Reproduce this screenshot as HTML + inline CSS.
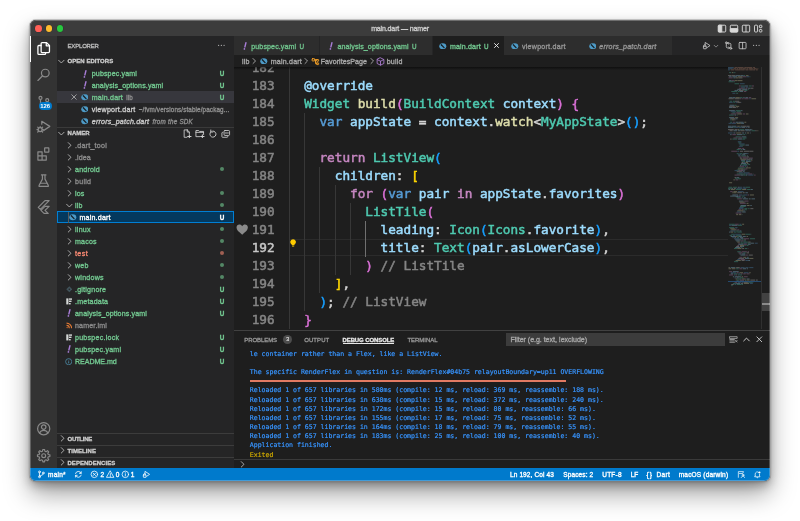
<!DOCTYPE html>
<html><head><meta charset="utf-8"><title>main.dart — namer</title>
<style>
*{box-sizing:border-box;margin:0;padding:0}
html,body{width:800px;height:521px;background:#fff;overflow:hidden}
body{font-family:"Liberation Sans",sans-serif;font-size:7.07px;color:#ccc;position:relative}
#win{position:absolute;left:29.9px;top:20.1px;width:740px;height:460.7px;border-radius:6px;overflow:hidden;background:#1e1e1e;
 box-shadow:0 0 0 .6px rgba(255,255,255,.4),0 0 0 1.1px rgba(0,0,0,.22),0 13px 26px rgba(0,0,0,.36),0 5px 10px rgba(0,0,0,.26),0 1px 3px rgba(0,0,0,.2)}
#pg{will-change:transform;position:absolute;left:-29.9px;top:-20.1px;width:800px;height:521px}
.a{position:absolute}
.t{position:absolute;white-space:nowrap;line-height:12px;height:12px;-webkit-text-stroke:.32px}
#title{left:29.9px;top:20.1px;width:740px;height:15.6px;background:#3c3c3c}
#act{left:29.9px;top:35.7px;width:26.7px;height:432.6px;background:#333}
#side{left:56.6px;top:35.7px;width:177.15px;height:432.6px;background:#252526}
#tabs{left:233.75px;top:35.7px;width:536px;height:19px;background:#252526}
#bc{left:233.75px;top:54.7px;width:536px;height:12px;background:#1e1e1e}
#ed{left:233.75px;top:66.7px;width:536px;height:262.7px;background:#1e1e1e;overflow:hidden}
#panel{left:233.75px;top:329.6px;width:536px;height:138.9px;background:#1e1e1e;border-top:1px solid #414141}
#status{left:29.9px;top:467.8px;width:740px;height:13.3px;background:#007acc}
.con{font-family:'DejaVu Sans Mono','Liberation Mono',monospace;font-size:6.54px;line-height:9.2px;height:9.2px;white-space:pre;-webkit-text-stroke:.2px}
.ln{font-family:'DejaVu Sans Mono','Liberation Mono',monospace;font-size:12.7px;line-height:18px;height:18px;text-align:right}
.cd{font-family:'DejaVu Sans Mono','Liberation Mono',monospace;font-size:12.7px;line-height:18px;height:18px;white-space:pre;-webkit-text-stroke:.5px}
.ln{-webkit-text-stroke:.5px}
</style></head><body>
<div id="win"><div id="pg">
<div class="a" id="title"></div>
<div class="a" id="act"></div>
<div class="a" id="side"></div>
<div class="a" id="tabs"></div>
<div class="a" id="bc"></div>
<div class="a" id="ed"></div>
<div class="a" id="panel"></div>
<div class="a" id="status"></div>

<div class="a" style="left:34.85px;top:25.2px;width:6.7px;height:6.7px;border-radius:50%;background:#ff5f57;box-shadow:0 0 0 .3px rgba(0,0,0,.25)"></div>
<div class="a" style="left:45.7px;top:25.2px;width:6.7px;height:6.7px;border-radius:50%;background:#febc2e;box-shadow:0 0 0 .3px rgba(0,0,0,.25)"></div>
<div class="a" style="left:56.55px;top:25.2px;width:6.7px;height:6.7px;border-radius:50%;background:#28c840;box-shadow:0 0 0 .3px rgba(0,0,0,.25)"></div>
<div class="t" id="ttl" style="left:300px;width:200px;text-align:center;top:22.6px;color:#ccc;letter-spacing:-.16px">main.dart — namer</div>
<svg class="a" style="left:717px;top:24px" width="46" height="9.2" viewBox="0 0 46 9.2" fill="none" stroke="#d8d8d8" stroke-width="0.95"><rect x="1.30" y="1.20" width="7.4" height="6.8" rx="0.9"/><rect x="1.30" y="1.20" width="3.48" height="6.8" rx="0.5" fill="#d8d8d8"/><rect x="13.30" y="1.20" width="7.4" height="6.8" rx="0.9"/><rect x="13.30" y="4.60" width="7.4" height="3.40" rx="0.5" fill="#d8d8d8"/><rect x="25.30" y="1.20" width="7.4" height="6.8" rx="0.9"/><path d="M29.00 1.20v6.8"/><rect x="37.50" y="1.20" width="3.1" height="6.8" rx="0.9"/><rect x="42.40" y="1.20" width="2.5" height="2.5" rx="0.7"/><rect x="42.40" y="5.50" width="2.500" height="2.500" rx="0.7"/></svg>

<div class="a" style="left:29.9px;top:35.7px;width:1.6px;height:26.1px;background:#fff"></div>
<svg class="a" style="left:35.80px;top:41.05px" width="15.4" height="15.4" viewBox="0 0 24 24" fill="none" stroke="#fff" stroke-width="2" stroke-linejoin="round" stroke-linecap="round"><path d="M9.5 2.5h7l4.5 4.5v9.5a1.5 1.5 0 0 1-1.5 1.5h-10A1.5 1.5 0 0 1 8 16.5V4a1.5 1.5 0 0 1 1.5-1.5z"/><path d="M16 2.8V7.5h4.7" /><path d="M8 7H4.5A1.5 1.5 0 0 0 3 8.500v11A1.500 1.500 0 0 0 4.500 21h9a1.500 1.500 0 0 0 1.500-1.500V18"/></svg>
<svg class="a" style="left:35.80px;top:67.14px" width="15.4" height="15.4" viewBox="0 0 24 24" fill="none" stroke="#8a8a8a" stroke-width="1.9" stroke-linejoin="round" stroke-linecap="round"><circle cx="14.5" cy="9.5" r="6"/><path d="M10.300 13.700L3 21"/></svg>
<svg class="a" style="left:35.80px;top:94.90px" width="15.4" height="15.4" viewBox="0 0 24 24" fill="none" stroke="#8a8a8a" stroke-width="1.9" stroke-linejoin="round" stroke-linecap="round"><circle cx="7" cy="4.500" r="2.300"/><circle cx="17.500" cy="8" r="2.300"/><path d="M7 7v11"/><path d="M17.500 10.300c0 4-5 4-10.500 6"/></svg>
<div class="a" style="left:38.5px;top:101.6px;width:13.4px;height:8.6px;border-radius:4.3px;background:#007acc;color:#fff;font-size:5.9px;font-weight:bold;line-height:8.8px;text-align:center">126</div>
<svg class="a" style="left:35.80px;top:119.30px" width="15.4" height="15.4" viewBox="0 0 24 24" fill="none" stroke="#8a8a8a" stroke-width="1.9" stroke-linejoin="round" stroke-linecap="round"><path d="M9 8V3.500L21.500 11.500 12 18"/><circle cx="6.500" cy="16.500" r="3.200"/><path d="M6.500 13.300v-1.500M3.300 16.500H1.500M9.700 16.500h1.800M4.200 14.200l-1.500-1.500M8.800 14.200l1.500-1.500M4.200 18.800l-1.500 1.500M8.800 18.800l1.500 1.500"/></svg>
<svg class="a" style="left:35.80px;top:146.39px" width="15.4" height="15.4" viewBox="0 0 24 24" fill="none" stroke="#8a8a8a" stroke-width="1.9" stroke-linejoin="round" stroke-linecap="round"><path d="M3 9h6.500v6.500H3zM3 15.500h6.500V22H3zM9.500 15.500H16V22H9.500z"/><rect x="13.500" y="3" width="6.500" height="6.500" rx="0.500"/></svg>
<svg class="a" style="left:35.80px;top:172.59px" width="15.4" height="15.4" viewBox="0 0 24 24" fill="none" stroke="#8a8a8a" stroke-width="1.9" stroke-linejoin="round" stroke-linecap="round"><path d="M8.500 3h7M10 3v6.500L4.700 19.500a1 1 0 0 0 .9 1.500h12.800a1 1 0 0 0 .9-1.500L14 9.500V3"/><path d="M7 16h10"/></svg>
<svg class="a" style="left:35.80px;top:198.60px" width="15.4" height="15.4" viewBox="0 0 24 24" fill="none" stroke="#8a8a8a" stroke-width="1.8" stroke-linejoin="round" stroke-linecap="round"><path d="M14 2.500L3.500 13l3.300 3.300L20.500 2.500z"/><path d="M14 11.500l-6.300 6.300 4.800 4.700h6.500l-5-4.800 6.500-6.200z"/></svg>
<svg class="a" style="left:35.80px;top:421.40px" width="15.4" height="15.4" viewBox="0 0 24 24" fill="none" stroke="#8a8a8a" stroke-width="1.9" stroke-linejoin="round" stroke-linecap="round"><circle cx="12" cy="12" r="9.500"/><circle cx="12" cy="9.500" r="3.500"/><path d="M5.500 18.500c1.500-3 4-4 6.500-4s5 1 6.500 4"/></svg>
<svg class="a" style="left:35.80px;top:447.50px" width="15.4" height="15.4" viewBox="0 0 24 24" fill="none" stroke="#8a8a8a" stroke-width="1.8" stroke-linejoin="round" stroke-linecap="round"><circle cx="12" cy="12" r="3"/><path d="M21.71 10.70L21.71 13.30L19.06 13.87L18.31 15.67L19.79 17.95L17.95 19.79L15.67 18.31L13.87 19.06L13.30 21.71L10.70 21.71L10.13 19.06L8.33 18.31L6.05 19.79L4.21 17.95L5.69 15.67L4.94 13.87L2.29 13.30L2.29 10.70L4.94 10.13L5.69 8.33L4.21 6.05L6.05 4.21L8.33 5.69L10.13 4.94L10.70 2.29L13.30 2.29L13.87 4.94L15.67 5.69L17.95 4.21L19.79 6.05L18.31 8.33L19.06 10.13Z"/></svg>

<div class="t" style="left:67.50px;top:39.60px;line-height:12px;height:12px;font-family:'Liberation Sans',sans-serif;font-size:5.98px;font-weight:normal;font-style:normal;color:#bbb;letter-spacing:-0.158px;">EXPLORER</div>
<svg class="a" style="left:216.95px;top:41.15px;" width="8.7" height="8.7" viewBox="0 0 16 16" fill="#c5c5c5" stroke="#c5c5c5" stroke-width="0" stroke-linejoin="round" stroke-linecap="round"><circle cx="3" cy="8" r="1.100"/><circle cx="8" cy="8" r="1.100"/><circle cx="13" cy="8" r="1.100"/></svg>
<svg class="a" style="left:57.40px;top:57.05px;" width="8.7" height="8.7" viewBox="0 0 16 16" fill="none" stroke="#c5c5c5" stroke-width="1.5" stroke-linejoin="round" stroke-linecap="round"><path d="M3 6l5 5 5-5"/></svg>
<div class="t" style="left:67.50px;top:55.35px;line-height:12px;height:12px;font-family:'Liberation Sans',sans-serif;font-size:5.98px;font-weight:bold;font-style:normal;color:#ccc;letter-spacing:0.062px;">OPEN EDITORS</div>
<div class="a" style="left:56.6px;top:91.36px;width:177.15px;height:11.97px;background:#37373d"></div>
<svg class="a" style="left:80.80px;top:69.50px" width="8" height="8" viewBox="0 0 8 8"><path d="M4.900 0.800L3.900 4.900" stroke="#a87dd6" stroke-width="1.450" stroke-linecap="round"/><circle cx="3.400" cy="6.900" r="0.850" fill="#a87dd6"/></svg>
<div class="t" style="left:91.75px;top:68.10px;line-height:12px;height:12px;font-family:'Liberation Sans',sans-serif;font-size:7.07px;font-weight:normal;font-style:normal;color:#73c991;letter-spacing:0.139px;">pubspec.yaml</div>
<div class="t" style="left:219.80px;top:68.10px;line-height:12px;height:12px;font-family:'Liberation Sans',sans-serif;font-size:6.3px;font-weight:bold;font-style:normal;color:#73c991;letter-spacing:0;">U</div>
<svg class="a" style="left:80.80px;top:81.47px" width="8" height="8" viewBox="0 0 8 8"><path d="M4.900 0.800L3.900 4.900" stroke="#a87dd6" stroke-width="1.450" stroke-linecap="round"/><circle cx="3.400" cy="6.900" r="0.850" fill="#a87dd6"/></svg>
<div class="t" style="left:91.75px;top:80.07px;line-height:12px;height:12px;font-family:'Liberation Sans',sans-serif;font-size:7.07px;font-weight:normal;font-style:normal;color:#73c991;letter-spacing:0.115px;">analysis_options.yaml</div>
<div class="t" style="left:219.80px;top:80.07px;line-height:12px;height:12px;font-family:'Liberation Sans',sans-serif;font-size:6.3px;font-weight:bold;font-style:normal;color:#73c991;letter-spacing:0;">U</div>
<svg class="a" style="left:80.70px;top:94.04px" width="7.6" height="6.650" viewBox="0 0 16 14"><ellipse cx="8" cy="7" rx="7.400" ry="6.300" fill="#4d9ac6"/><path d="M4.800 3.800L10.600 9.800" stroke="#182026" stroke-width="2.800" stroke-linecap="round"/></svg>
<div class="t" style="left:91.75px;top:92.04px;line-height:12px;height:12px;font-family:'Liberation Sans',sans-serif;font-size:7.07px;font-weight:normal;font-style:normal;color:#73c991;letter-spacing:0.200px;">main.dart</div>
<div class="t" style="left:126.30px;top:92.14px;line-height:12px;height:12px;font-family:'Liberation Sans',sans-serif;font-size:6.3px;font-weight:normal;font-style:normal;color:#8f8f8f;letter-spacing:0.062px;">lib</div>
<div class="t" style="left:219.80px;top:92.04px;line-height:12px;height:12px;font-family:'Liberation Sans',sans-serif;font-size:6.3px;font-weight:bold;font-style:normal;color:#73c991;letter-spacing:0;">U</div>
<svg class="a" style="left:80.70px;top:106.01px" width="7.6" height="6.650" viewBox="0 0 16 14"><ellipse cx="8" cy="7" rx="7.400" ry="6.300" fill="#4d9ac6"/><path d="M4.800 3.800L10.600 9.800" stroke="#182026" stroke-width="2.800" stroke-linecap="round"/></svg>
<div class="t" style="left:91.75px;top:104.01px;line-height:12px;height:12px;font-family:'Liberation Sans',sans-serif;font-size:7.07px;font-weight:normal;font-style:normal;color:#ccc;letter-spacing:0.255px;">viewport.dart</div>
<div class="t" style="left:138.80px;top:104.11px;line-height:12px;height:12px;font-family:'Liberation Sans',sans-serif;font-size:6.3px;font-weight:normal;font-style:normal;color:#8f8f8f;letter-spacing:0.125px;">~/fvm/versions/stable/packag...</div>
<svg class="a" style="left:80.70px;top:117.98px" width="7.6" height="6.650" viewBox="0 0 16 14"><ellipse cx="8" cy="7" rx="7.400" ry="6.300" fill="#4d9ac6"/><path d="M4.800 3.800L10.600 9.800" stroke="#182026" stroke-width="2.800" stroke-linecap="round"/></svg>
<div class="t" style="left:91.75px;top:115.98px;line-height:12px;height:12px;font-family:'Liberation Sans',sans-serif;font-size:7.07px;font-weight:normal;font-style:italic;color:#ccc;letter-spacing:0.219px;">errors_patch.dart</div>
<div class="t" style="left:152.55px;top:116.08px;line-height:12px;height:12px;font-family:'Liberation Sans',sans-serif;font-size:6.3px;font-weight:normal;font-style:italic;color:#8f8f8f;letter-spacing:0.225px;">from the SDK</div>
<svg class="a" style="left:70.25px;top:93.34px;" width="8" height="8" viewBox="0 0 16 16" fill="none" stroke="#c5c5c5" stroke-width="1.4" stroke-linejoin="round" stroke-linecap="round"><path d="M3.500 3.500l9 9M12.500 3.500l-9 9"/></svg>
<div class="a" style="left:56.6px;top:127.2px;width:177.15px;height:.6px;background:#3a3a3a"></div>
<svg class="a" style="left:57.40px;top:129.05px;" width="8.7" height="8.7" viewBox="0 0 16 16" fill="none" stroke="#c5c5c5" stroke-width="1.5" stroke-linejoin="round" stroke-linecap="round"><path d="M3 6l5 5 5-5"/></svg>
<div class="t" style="left:67.50px;top:127.35px;line-height:12px;height:12px;font-family:'Liberation Sans',sans-serif;font-size:5.98px;font-weight:bold;font-style:normal;color:#ccc;letter-spacing:0.072px;">NAMER</div>
<svg class="a" style="left:182.00px;top:128.60px;" width="9.8" height="9.8" viewBox="0 0 16 16" fill="none" stroke="#d0d0d0" stroke-width="1.4" stroke-linejoin="round" stroke-linecap="round"><path d="M8.500 1.500H3.500v12h4.500M8.500 1.500l3.500 3.500v3M8.500 1.500V5h3.500"/><path d="M12 9.500v5.500M9.200 12.300h5.600" stroke-width="1.700"/></svg>
<svg class="a" style="left:195.10px;top:128.60px;" width="9.8" height="9.8" viewBox="0 0 16 16" fill="none" stroke="#d0d0d0" stroke-width="1.4" stroke-linejoin="round" stroke-linecap="round"><path d="M7.500 12.500H1.500v-10h4.500l1.500 1.500h6.500v5"/><path d="M1.500 5.500h12.500"/><path d="M12 9.500v5.500M9.200 12.300h5.600" stroke-width="1.700"/></svg>
<svg class="a" style="left:207.80px;top:128.60px;" width="9.8" height="9.8" viewBox="0 0 16 16" fill="none" stroke="#d0d0d0" stroke-width="1.5" stroke-linejoin="round" stroke-linecap="round"><path d="M4.460 4.760A5 5 0 1 0 8 3.300"/><path d="M4.600 1.600v3.300h3.300"/></svg>
<svg class="a" style="left:221.30px;top:128.60px;" width="9.8" height="9.8" viewBox="0 0 16 16" fill="none" stroke="#d0d0d0" stroke-width="1.4" stroke-linejoin="round" stroke-linecap="round"><rect x="5" y="2.500" width="9" height="8" rx="1.500"/><path d="M3 5.500H2.500a1 1 0 0 0-1 1v6a1 1 0 0 0 1 1h7.500a1 1 0 0 0 1-1v-.500"/><path d="M7 6.500h5"/></svg>
<svg class="a" style="left:64.95px;top:140.90px;" width="8.7" height="8.7" viewBox="0 0 16 16" fill="none" stroke="#c5c5c5" stroke-width="1.5" stroke-linejoin="round" stroke-linecap="round"><path d="M6 3l5 5-5 5"/></svg>
<div class="t" style="left:75.00px;top:139.95px;line-height:12px;height:12px;font-family:'Liberation Sans',sans-serif;font-size:7.07px;font-weight:normal;font-style:normal;color:#8c8c8c;letter-spacing:0.255px;">.dart_tool</div>
<svg class="a" style="left:64.95px;top:152.90px;" width="8.7" height="8.7" viewBox="0 0 16 16" fill="none" stroke="#c5c5c5" stroke-width="1.5" stroke-linejoin="round" stroke-linecap="round"><path d="M6 3l5 5-5 5"/></svg>
<div class="t" style="left:75.00px;top:151.95px;line-height:12px;height:12px;font-family:'Liberation Sans',sans-serif;font-size:7.07px;font-weight:normal;font-style:normal;color:#8c8c8c;letter-spacing:0.084px;">.idea</div>
<svg class="a" style="left:64.95px;top:164.90px;" width="8.7" height="8.7" viewBox="0 0 16 16" fill="none" stroke="#c5c5c5" stroke-width="1.5" stroke-linejoin="round" stroke-linecap="round"><path d="M6 3l5 5-5 5"/></svg>
<div class="t" style="left:75.00px;top:163.95px;line-height:12px;height:12px;font-family:'Liberation Sans',sans-serif;font-size:7.07px;font-weight:normal;font-style:normal;color:#73c991;letter-spacing:0.205px;">android</div>
<div class="a" style="left:220px;top:167.15px;width:4.2px;height:4.2px;border-radius:50%;background:#73c991;opacity:.6"></div>
<svg class="a" style="left:64.95px;top:176.90px;" width="8.7" height="8.7" viewBox="0 0 16 16" fill="none" stroke="#c5c5c5" stroke-width="1.5" stroke-linejoin="round" stroke-linecap="round"><path d="M6 3l5 5-5 5"/></svg>
<div class="t" style="left:75.00px;top:175.95px;line-height:12px;height:12px;font-family:'Liberation Sans',sans-serif;font-size:7.07px;font-weight:normal;font-style:normal;color:#8c8c8c;letter-spacing:0.266px;">build</div>
<svg class="a" style="left:64.95px;top:188.90px;" width="8.7" height="8.7" viewBox="0 0 16 16" fill="none" stroke="#c5c5c5" stroke-width="1.5" stroke-linejoin="round" stroke-linecap="round"><path d="M6 3l5 5-5 5"/></svg>
<div class="t" style="left:75.00px;top:187.95px;line-height:12px;height:12px;font-family:'Liberation Sans',sans-serif;font-size:7.07px;font-weight:normal;font-style:normal;color:#73c991;letter-spacing:0.156px;">ios</div>
<div class="a" style="left:220px;top:191.15px;width:4.2px;height:4.2px;border-radius:50%;background:#73c991;opacity:.6"></div>
<svg class="a" style="left:64.95px;top:200.90px;" width="8.7" height="8.7" viewBox="0 0 16 16" fill="none" stroke="#c5c5c5" stroke-width="1.5" stroke-linejoin="round" stroke-linecap="round"><path d="M3 6l5 5 5-5"/></svg>
<div class="t" style="left:75.00px;top:199.95px;line-height:12px;height:12px;font-family:'Liberation Sans',sans-serif;font-size:7.07px;font-weight:normal;font-style:normal;color:#73c991;letter-spacing:0.141px;">lib</div>
<div class="a" style="left:220px;top:203.15px;width:4.2px;height:4.2px;border-radius:50%;background:#73c991;opacity:.6"></div>
<div class="a" style="left:56.6px;top:211.25px;width:177.15px;height:12px;background:#04395e;border:.7px solid #007fd4"></div>
<div class="a" style="left:67.9px;top:211.95px;width:.6px;height:10.6px;background:#5a5a5a"></div>
<svg class="a" style="left:69.20px;top:213.95px" width="7.6" height="6.650" viewBox="0 0 16 14"><ellipse cx="8" cy="7" rx="7.400" ry="6.300" fill="#4d9ac6"/><path d="M4.800 3.800L10.600 9.800" stroke="#182026" stroke-width="2.800" stroke-linecap="round"/></svg>
<div class="t" style="left:79.50px;top:211.95px;line-height:12px;height:12px;font-family:'Liberation Sans',sans-serif;font-size:7.07px;font-weight:normal;font-style:normal;color:#fff;letter-spacing:0.200px;">main.dart</div>
<div class="t" style="left:219.80px;top:211.95px;line-height:12px;height:12px;font-family:'Liberation Sans',sans-serif;font-size:6.3px;font-weight:bold;font-style:normal;color:#fff;letter-spacing:0;">U</div>
<svg class="a" style="left:64.95px;top:224.90px;" width="8.7" height="8.7" viewBox="0 0 16 16" fill="none" stroke="#c5c5c5" stroke-width="1.5" stroke-linejoin="round" stroke-linecap="round"><path d="M6 3l5 5-5 5"/></svg>
<div class="t" style="left:75.00px;top:223.95px;line-height:12px;height:12px;font-family:'Liberation Sans',sans-serif;font-size:7.07px;font-weight:normal;font-style:normal;color:#73c991;letter-spacing:0.244px;">linux</div>
<div class="a" style="left:220px;top:227.15px;width:4.2px;height:4.2px;border-radius:50%;background:#73c991;opacity:.6"></div>
<svg class="a" style="left:64.95px;top:236.90px;" width="8.7" height="8.7" viewBox="0 0 16 16" fill="none" stroke="#c5c5c5" stroke-width="1.5" stroke-linejoin="round" stroke-linecap="round"><path d="M6 3l5 5-5 5"/></svg>
<div class="t" style="left:75.00px;top:235.95px;line-height:12px;height:12px;font-family:'Liberation Sans',sans-serif;font-size:7.07px;font-weight:normal;font-style:normal;color:#73c991;letter-spacing:0.188px;">macos</div>
<div class="a" style="left:220px;top:239.15px;width:4.2px;height:4.2px;border-radius:50%;background:#73c991;opacity:.6"></div>
<svg class="a" style="left:64.95px;top:248.90px;" width="8.7" height="8.7" viewBox="0 0 16 16" fill="none" stroke="#c5c5c5" stroke-width="1.5" stroke-linejoin="round" stroke-linecap="round"><path d="M6 3l5 5-5 5"/></svg>
<div class="t" style="left:75.00px;top:247.95px;line-height:12px;height:12px;font-family:'Liberation Sans',sans-serif;font-size:7.07px;font-weight:normal;font-style:normal;color:#f48771;letter-spacing:0.402px;">test</div>
<div class="a" style="left:220px;top:251.15px;width:4.2px;height:4.2px;border-radius:50%;background:#f48771;opacity:.6"></div>
<svg class="a" style="left:64.95px;top:260.90px;" width="8.7" height="8.7" viewBox="0 0 16 16" fill="none" stroke="#c5c5c5" stroke-width="1.5" stroke-linejoin="round" stroke-linecap="round"><path d="M6 3l5 5-5 5"/></svg>
<div class="t" style="left:75.00px;top:259.95px;line-height:12px;height:12px;font-family:'Liberation Sans',sans-serif;font-size:7.07px;font-weight:normal;font-style:normal;color:#73c991;letter-spacing:0.260px;">web</div>
<div class="a" style="left:220px;top:263.15px;width:4.2px;height:4.2px;border-radius:50%;background:#73c991;opacity:.6"></div>
<svg class="a" style="left:64.95px;top:272.90px;" width="8.7" height="8.7" viewBox="0 0 16 16" fill="none" stroke="#c5c5c5" stroke-width="1.5" stroke-linejoin="round" stroke-linecap="round"><path d="M6 3l5 5-5 5"/></svg>
<div class="t" style="left:75.00px;top:271.95px;line-height:12px;height:12px;font-family:'Liberation Sans',sans-serif;font-size:7.07px;font-weight:normal;font-style:normal;color:#73c991;letter-spacing:0.237px;">windows</div>
<div class="a" style="left:220px;top:275.15px;width:4.2px;height:4.2px;border-radius:50%;background:#73c991;opacity:.6"></div>
<svg class="a" style="left:65.50px;top:285.95px" width="6.6" height="6.600" viewBox="0 0 12 12"><path d="M6 0.500L11.500 6 6 11.500 0.500 6z" fill="#41535b"/><circle cx="6" cy="6" r="1.400" fill="#252526"/></svg>
<div class="t" style="left:75.00px;top:283.95px;line-height:12px;height:12px;font-family:'Liberation Sans',sans-serif;font-size:7.07px;font-weight:normal;font-style:normal;color:#73c991;letter-spacing:0.219px;">.gitignore</div>
<div class="t" style="left:219.80px;top:283.95px;line-height:12px;height:12px;font-family:'Liberation Sans',sans-serif;font-size:6.3px;font-weight:bold;font-style:normal;color:#73c991;letter-spacing:0;">U</div>
<svg class="a" style="left:65.50px;top:297.85px" width="6.6" height="6.8" viewBox="0 0 12 12" fill="#d4d7d6"><rect x="0.500" y="0.500" width="4" height="11"/><rect x="5.500" y="0.500" width="6" height="2.600"/><rect x="5.500" y="4.500" width="4.500" height="2.600"/><rect x="5.500" y="8.900" width="3" height="2.600"/></svg>
<div class="t" style="left:75.00px;top:295.95px;line-height:12px;height:12px;font-family:'Liberation Sans',sans-serif;font-size:7.07px;font-weight:normal;font-style:normal;color:#73c991;letter-spacing:0.203px;">.metadata</div>
<div class="t" style="left:219.80px;top:295.95px;line-height:12px;height:12px;font-family:'Liberation Sans',sans-serif;font-size:6.3px;font-weight:bold;font-style:normal;color:#73c991;letter-spacing:0;">U</div>
<svg class="a" style="left:65.10px;top:309.35px" width="8" height="8" viewBox="0 0 8 8"><path d="M4.900 0.800L3.900 4.900" stroke="#a87dd6" stroke-width="1.450" stroke-linecap="round"/><circle cx="3.400" cy="6.900" r="0.850" fill="#a87dd6"/></svg>
<div class="t" style="left:75.00px;top:307.95px;line-height:12px;height:12px;font-family:'Liberation Sans',sans-serif;font-size:7.07px;font-weight:normal;font-style:normal;color:#73c991;letter-spacing:0.138px;">analysis_options.yaml</div>
<div class="t" style="left:219.80px;top:307.95px;line-height:12px;height:12px;font-family:'Liberation Sans',sans-serif;font-size:6.3px;font-weight:bold;font-style:normal;color:#73c991;letter-spacing:0;">U</div>
<svg class="a" style="left:65.50px;top:321.95px" width="6.6" height="6.600" viewBox="0 0 12 12" fill="none" stroke="#e37933" stroke-width="2"><path d="M1 6.200a5 5 0 0 1 5 5M1 2a9.200 9.200 0 0 1 9.200 9.200"/><circle cx="2" cy="10.200" r="1.200" fill="#e37933" stroke="none"/></svg>
<div class="t" style="left:75.00px;top:319.95px;line-height:12px;height:12px;font-family:'Liberation Sans',sans-serif;font-size:7.07px;font-weight:normal;font-style:normal;color:#8c8c8c;letter-spacing:0.153px;">namer.iml</div>
<svg class="a" style="left:65.50px;top:333.85px" width="6.6" height="6.8" viewBox="0 0 12 12" fill="#d4d7d6"><rect x="0.500" y="0.500" width="4" height="11"/><rect x="5.500" y="0.500" width="6" height="2.600"/><rect x="5.500" y="4.500" width="4.500" height="2.600"/><rect x="5.500" y="8.900" width="3" height="2.600"/></svg>
<div class="t" style="left:75.00px;top:331.95px;line-height:12px;height:12px;font-family:'Liberation Sans',sans-serif;font-size:7.07px;font-weight:normal;font-style:normal;color:#73c991;letter-spacing:0.251px;">pubspec.lock</div>
<div class="t" style="left:219.80px;top:331.95px;line-height:12px;height:12px;font-family:'Liberation Sans',sans-serif;font-size:6.3px;font-weight:bold;font-style:normal;color:#73c991;letter-spacing:0;">U</div>
<svg class="a" style="left:65.10px;top:345.35px" width="8" height="8" viewBox="0 0 8 8"><path d="M4.900 0.800L3.900 4.900" stroke="#a87dd6" stroke-width="1.450" stroke-linecap="round"/><circle cx="3.400" cy="6.900" r="0.850" fill="#a87dd6"/></svg>
<div class="t" style="left:75.00px;top:343.95px;line-height:12px;height:12px;font-family:'Liberation Sans',sans-serif;font-size:7.07px;font-weight:normal;font-style:normal;color:#73c991;letter-spacing:0.223px;">pubspec.yaml</div>
<div class="t" style="left:219.80px;top:343.95px;line-height:12px;height:12px;font-family:'Liberation Sans',sans-serif;font-size:6.3px;font-weight:bold;font-style:normal;color:#73c991;letter-spacing:0;">U</div>
<svg class="a" style="left:65.10px;top:357.55px" width="7.4" height="7.400" viewBox="0 0 14 14" fill="none" stroke="#519aba" stroke-width="1.300"><circle cx="7" cy="7" r="5.800"/><path d="M7 6.200v4M7 3.600v1" stroke-width="1.500"/></svg>
<div class="t" style="left:75.00px;top:355.95px;line-height:12px;height:12px;font-family:'Liberation Sans',sans-serif;font-size:7.07px;font-weight:normal;font-style:normal;color:#73c991;letter-spacing:-0.028px;">README.md</div>
<div class="t" style="left:219.80px;top:355.95px;line-height:12px;height:12px;font-family:'Liberation Sans',sans-serif;font-size:6.3px;font-weight:bold;font-style:normal;color:#73c991;letter-spacing:0;">U</div>
<div class="a" style="left:56.6px;top:433.30px;width:177.15px;height:.7px;background:#3c3c3c"></div>
<svg class="a" style="left:57.55px;top:434.45px;" width="8.7" height="8.7" viewBox="0 0 16 16" fill="none" stroke="#c5c5c5" stroke-width="1.5" stroke-linejoin="round" stroke-linecap="round"><path d="M6 3l5 5-5 5"/></svg>
<div class="t" style="left:67.50px;top:432.80px;line-height:12px;height:12px;font-family:'Liberation Sans',sans-serif;font-size:5.98px;font-weight:bold;font-style:normal;color:#ccc;letter-spacing:-0.243px;">OUTLINE</div>
<div class="a" style="left:56.6px;top:445.30px;width:177.15px;height:.7px;background:#3c3c3c"></div>
<svg class="a" style="left:57.55px;top:446.45px;" width="8.7" height="8.7" viewBox="0 0 16 16" fill="none" stroke="#c5c5c5" stroke-width="1.5" stroke-linejoin="round" stroke-linecap="round"><path d="M6 3l5 5-5 5"/></svg>
<div class="t" style="left:67.50px;top:444.80px;line-height:12px;height:12px;font-family:'Liberation Sans',sans-serif;font-size:5.98px;font-weight:bold;font-style:normal;color:#ccc;letter-spacing:0.080px;">TIMELINE</div>
<div class="a" style="left:56.6px;top:457.30px;width:177.15px;height:.7px;background:#3c3c3c"></div>
<svg class="a" style="left:57.55px;top:458.45px;" width="8.7" height="8.7" viewBox="0 0 16 16" fill="none" stroke="#c5c5c5" stroke-width="1.5" stroke-linejoin="round" stroke-linecap="round"><path d="M6 3l5 5-5 5"/></svg>
<div class="t" style="left:67.50px;top:456.80px;line-height:12px;height:12px;font-family:'Liberation Sans',sans-serif;font-size:5.98px;font-weight:bold;font-style:normal;color:#ccc;letter-spacing:0.053px;">DEPENDENCIES</div>
<div class="a" style="left:233.75px;top:35.7px;width:85.20px;height:19px;background:#2d2d2d"></div>
<div class="a" style="left:319.5px;top:35.7px;width:112.45px;height:19px;background:#2d2d2d"></div>
<div class="a" style="left:432.5px;top:35.7px;width:71.25px;height:19px;background:#1e1e1e"></div>
<div class="a" style="left:504.3px;top:35.7px;width:76.40px;height:19px;background:#2d2d2d"></div>
<div class="a" style="left:581.25px;top:35.7px;width:90.60px;height:19px;background:#2d2d2d"></div>
<svg class="a" style="left:240.55px;top:42.10px" width="8" height="8" viewBox="0 0 8 8"><path d="M4.900 0.800L3.900 4.900" stroke="#a87dd6" stroke-width="1.450" stroke-linecap="round"/><circle cx="3.400" cy="6.900" r="0.850" fill="#a87dd6"/></svg>
<div class="t" style="left:251.25px;top:40.70px;line-height:12px;height:12px;font-family:'Liberation Sans',sans-serif;font-size:7.07px;font-weight:normal;font-style:normal;color:#70c48d;letter-spacing:0.118px;">pubspec.yaml</div>
<div class="t" style="left:299.60px;top:40.70px;line-height:12px;height:12px;font-family:'Liberation Sans',sans-serif;font-size:6.3px;font-weight:normal;font-style:normal;color:#70c48d;letter-spacing:0;">U</div>
<svg class="a" style="left:326.80px;top:42.10px" width="8" height="8" viewBox="0 0 8 8"><path d="M4.900 0.800L3.900 4.900" stroke="#a87dd6" stroke-width="1.450" stroke-linecap="round"/><circle cx="3.400" cy="6.900" r="0.850" fill="#a87dd6"/></svg>
<div class="t" style="left:337.50px;top:40.70px;line-height:12px;height:12px;font-family:'Liberation Sans',sans-serif;font-size:7.07px;font-weight:normal;font-style:normal;color:#70c48d;letter-spacing:0.103px;">analysis_options.yaml</div>
<div class="t" style="left:412.10px;top:40.70px;line-height:12px;height:12px;font-family:'Liberation Sans',sans-serif;font-size:6.3px;font-weight:normal;font-style:normal;color:#70c48d;letter-spacing:0;">U</div>
<svg class="a" style="left:439.45px;top:42.70px" width="7.6" height="6.650" viewBox="0 0 16 14"><ellipse cx="8" cy="7" rx="7.400" ry="6.300" fill="#4d9ac6"/><path d="M4.800 3.800L10.600 9.800" stroke="#182026" stroke-width="2.800" stroke-linecap="round"/></svg>
<div class="t" style="left:450.00px;top:40.70px;line-height:12px;height:12px;font-family:'Liberation Sans',sans-serif;font-size:7.07px;font-weight:normal;font-style:normal;color:#73c991;letter-spacing:0.144px;">main.dart</div>
<div class="t" style="left:484.10px;top:40.70px;line-height:12px;height:12px;font-family:'Liberation Sans',sans-serif;font-size:6.3px;font-weight:normal;font-style:normal;color:#73c991;letter-spacing:0;">U</div>
<svg class="a" style="left:492.80px;top:42.40px;" width="7" height="7" viewBox="0 0 16 16" fill="none" stroke="#e8e8e8" stroke-width="2.2" stroke-linejoin="round" stroke-linecap="round"><path d="M3.500 3.500l9 9M12.500 3.500l-9 9"/></svg>
<svg class="a" style="left:511.20px;top:42.70px" width="7.6" height="6.650" viewBox="0 0 16 14"><ellipse cx="8" cy="7" rx="7.400" ry="6.300" fill="#4d9ac6"/><path d="M4.800 3.800L10.600 9.800" stroke="#182026" stroke-width="2.800" stroke-linecap="round"/></svg>
<div class="t" style="left:522.00px;top:40.70px;line-height:12px;height:12px;font-family:'Liberation Sans',sans-serif;font-size:7.07px;font-weight:normal;font-style:normal;color:#969696;letter-spacing:0.255px;">viewport.dart</div>
<svg class="a" style="left:588.70px;top:42.70px" width="7.6" height="6.650" viewBox="0 0 16 14"><ellipse cx="8" cy="7" rx="7.400" ry="6.300" fill="#4d9ac6"/><path d="M4.800 3.800L10.600 9.800" stroke="#182026" stroke-width="2.800" stroke-linecap="round"/></svg>
<div class="t" style="left:599.25px;top:40.70px;line-height:12px;height:12px;font-family:'Liberation Sans',sans-serif;font-size:7.07px;font-weight:normal;font-style:italic;color:#969696;letter-spacing:0.204px;">errors_patch.dart</div>
<svg class="a" style="left:702.00px;top:41.00px;" width="9.2" height="9.2" viewBox="0 0 16 16" fill="none" stroke="#c5c5c5" stroke-width="1.5" stroke-linejoin="round" stroke-linecap="round"><path d="M5.500 6V2.500L14 8l-5 3.300"/><rect x="2.500" y="9" width="5" height="4.500" rx="0.500"/><path d="M3.500 9V7.800a1.500 1.500 0 0 1 3 0V9"/></svg>
<svg class="a" style="left:713.20px;top:42.90px;" width="6" height="6" viewBox="0 0 16 16" fill="none" stroke="#c5c5c5" stroke-width="1.5" stroke-linejoin="round" stroke-linecap="round"><path d="M3 6l5 5 5-5"/></svg>
<svg class="a" style="left:723.60px;top:41.00px;" width="9.2" height="9.2" viewBox="0 0 16 16" fill="none" stroke="#c5c5c5" stroke-width="1.5" stroke-linejoin="round" stroke-linecap="round"><circle cx="4" cy="3" r="1.500"/><circle cx="12" cy="13" r="1.500"/><path d="M4 4.500v5.500a2 2 0 0 0 2 2h3.500M8.200 10.300l1.700 1.700-1.700 1.700"/><path d="M12 11.500V6a2 2 0 0 0-2-2H6.500M7.800 5.700L6.100 4l1.700-1.700"/></svg>
<svg class="a" style="left:738.20px;top:41.00px;" width="9.2" height="9.2" viewBox="0 0 16 16" fill="none" stroke="#c5c5c5" stroke-width="1.5" stroke-linejoin="round" stroke-linecap="round"><rect x="2" y="2.500" width="12" height="11" rx="1.200"/><path d="M8 2.500v11"/></svg>
<svg class="a" style="left:752.45px;top:41.25px;" width="8.7" height="8.7" viewBox="0 0 16 16" fill="#c5c5c5" stroke="none" stroke-width="0" stroke-linejoin="round" stroke-linecap="round"><circle cx="3" cy="8" r="1.100"/><circle cx="8" cy="8" r="1.100"/><circle cx="13" cy="8" r="1.100"/></svg>
<div class="t" style="left:242.00px;top:55.80px;line-height:12px;height:12px;font-family:'Liberation Sans',sans-serif;font-size:7.07px;font-weight:normal;font-style:normal;color:#a9a9a9;letter-spacing:0.141px;">lib</div>
<svg class="a" style="left:250.25px;top:57.30px;" width="8" height="8" viewBox="0 0 16 16" fill="none" stroke="#b4b4b4" stroke-width="1.7" stroke-linejoin="round" stroke-linecap="round"><path d="M6 3l5 5-5 5"/></svg>
<svg class="a" style="left:260.45px;top:57.80px" width="7.6" height="6.650" viewBox="0 0 16 14"><ellipse cx="8" cy="7" rx="7.400" ry="6.300" fill="#4d9ac6"/><path d="M4.800 3.800L10.600 9.800" stroke="#182026" stroke-width="2.800" stroke-linecap="round"/></svg>
<div class="t" style="left:270.75px;top:55.80px;line-height:12px;height:12px;font-family:'Liberation Sans',sans-serif;font-size:7.07px;font-weight:normal;font-style:normal;color:#a9a9a9;letter-spacing:0.200px;">main.dart</div>
<svg class="a" style="left:302.25px;top:57.30px;" width="8" height="8" viewBox="0 0 16 16" fill="none" stroke="#b4b4b4" stroke-width="1.7" stroke-linejoin="round" stroke-linecap="round"><path d="M6 3l5 5-5 5"/></svg>
<svg class="a" style="left:310.50px;top:56.70px;" width="9" height="9" viewBox="0 0 16 16" fill="none" stroke="#ee9d28" stroke-width="1.7" stroke-linejoin="round" stroke-linecap="round"><rect x="2" y="3" width="4.500" height="4" rx=".5" transform="rotate(0)"/><rect x="10" y="4.500" width="3.500" height="3" rx=".5"/><rect x="10" y="10.500" width="3.500" height="3" rx=".5"/><path d="M6.500 5h3.500M8 5v7h2"/></svg>
<div class="t" style="left:320.75px;top:55.80px;line-height:12px;height:12px;font-family:'Liberation Sans',sans-serif;font-size:7.07px;font-weight:normal;font-style:normal;color:#a9a9a9;letter-spacing:0.054px;">FavoritesPage</div>
<svg class="a" style="left:367.60px;top:57.30px;" width="8" height="8" viewBox="0 0 16 16" fill="none" stroke="#b4b4b4" stroke-width="1.7" stroke-linejoin="round" stroke-linecap="round"><path d="M6 3l5 5-5 5"/></svg>
<svg class="a" style="left:376.00px;top:56.70px;" width="9" height="9" viewBox="0 0 16 16" fill="none" stroke="#b180d7" stroke-width="1.5" stroke-linejoin="round" stroke-linecap="round"><path d="M8 1.500L14 4.500v7L8 14.500 2 11.500v-7zM2.300 4.700l5.700 2.800 5.700-2.800M8 7.500v6.800"/></svg>
<div class="t" style="left:386.75px;top:55.80px;line-height:12px;height:12px;font-family:'Liberation Sans',sans-serif;font-size:7.07px;font-weight:normal;font-style:normal;color:#a9a9a9;letter-spacing:0.166px;">build</div>
<div class="a" style="left:0;top:66.7px;width:800px;height:262.7px;overflow:hidden"><div class="a" style="left:0;top:-66.7px;width:800px;height:521px"><div class="a" style="left:289px;top:238.90px;width:439.4px;height:17.2px;border-top:.8px solid #2b2b2b;border-bottom:.8px solid #2b2b2b"></div>
<div class="a" style="left:288.90px;top:58.50px;width:.8px;height:270px;background:#373737"></div>
<div class="a" style="left:304.19px;top:112.50px;width:.8px;height:198px;background:#373737"></div>
<div class="a" style="left:319.48px;top:166.50px;width:.8px;height:126px;background:#373737"></div>
<div class="a" style="left:334.78px;top:184.50px;width:.8px;height:90px;background:#373737"></div>
<div class="a" style="left:350.07px;top:202.50px;width:.8px;height:72px;background:#373737"></div>
<div class="a" style="left:365.36px;top:220.50px;width:.8px;height:36px;background:#707070"></div>
<div class="t ln" style="left:240px;width:34.6px;top:58.90px;color:#858585">182</div>
<div class="t ln" style="left:240px;width:34.6px;top:76.90px;color:#858585">183</div>
<div class="t cd" style="left:304.2px;top:76.90px"><span style="color:#9cdcfe">@override</span></div>
<div class="t ln" style="left:240px;width:34.6px;top:94.90px;color:#858585">184</div>
<div class="t cd" style="left:304.2px;top:94.90px"><span style="color:#4ec9b0">Widget</span><span style="color:#d4d4d4"> </span><span style="color:#dcdcaa">build</span><span style="color:#da70d6">(</span><span style="color:#4ec9b0">BuildContext</span><span style="color:#d4d4d4"> </span><span style="color:#9cdcfe">context</span><span style="color:#da70d6">)</span><span style="color:#d4d4d4"> </span><span style="color:#da70d6">{</span></div>
<div class="t ln" style="left:240px;width:34.6px;top:112.90px;color:#858585">185</div>
<div class="t cd" style="left:304.2px;top:112.90px"><span style="color:#d4d4d4">  </span><span style="color:#569cd6">var</span><span style="color:#d4d4d4"> </span><span style="color:#9cdcfe">appState</span><span style="color:#d4d4d4"> = </span><span style="color:#9cdcfe">context</span><span style="color:#d4d4d4">.</span><span style="color:#dcdcaa">watch</span><span style="color:#d4d4d4">&lt;</span><span style="color:#4ec9b0">MyAppState</span><span style="color:#d4d4d4">&gt;</span><span style="color:#179fff">()</span><span style="color:#d4d4d4">;</span></div>
<div class="t ln" style="left:240px;width:34.6px;top:130.90px;color:#858585">186</div>
<div class="t ln" style="left:240px;width:34.6px;top:148.90px;color:#858585">187</div>
<div class="t cd" style="left:304.2px;top:148.90px"><span style="color:#d4d4d4">  </span><span style="color:#c586c0">return</span><span style="color:#d4d4d4"> </span><span style="color:#4ec9b0">ListView</span><span style="color:#179fff">(</span></div>
<div class="t ln" style="left:240px;width:34.6px;top:166.90px;color:#858585">188</div>
<div class="t cd" style="left:304.2px;top:166.90px"><span style="color:#d4d4d4">    </span><span style="color:#9cdcfe">children</span><span style="color:#d4d4d4">: </span><span style="color:#ffd700">[</span></div>
<div class="t ln" style="left:240px;width:34.6px;top:184.90px;color:#858585">189</div>
<div class="t cd" style="left:304.2px;top:184.90px"><span style="color:#d4d4d4">      </span><span style="color:#c586c0">for</span><span style="color:#d4d4d4"> </span><span style="color:#da70d6">(</span><span style="color:#569cd6">var</span><span style="color:#d4d4d4"> </span><span style="color:#9cdcfe">pair</span><span style="color:#d4d4d4"> </span><span style="color:#c586c0">in</span><span style="color:#d4d4d4"> </span><span style="color:#9cdcfe">appState</span><span style="color:#d4d4d4">.</span><span style="color:#9cdcfe">favorites</span><span style="color:#da70d6">)</span></div>
<div class="t ln" style="left:240px;width:34.6px;top:202.90px;color:#858585">190</div>
<div class="t cd" style="left:304.2px;top:202.90px"><span style="color:#d4d4d4">        </span><span style="color:#4ec9b0">ListTile</span><span style="color:#da70d6">(</span></div>
<div class="t ln" style="left:240px;width:34.6px;top:220.90px;color:#858585">191</div>
<div class="t cd" style="left:304.2px;top:220.90px"><span style="color:#d4d4d4">          </span><span style="color:#9cdcfe">leading</span><span style="color:#d4d4d4">: </span><span style="color:#4ec9b0">Icon</span><span style="color:#179fff">(</span><span style="color:#4ec9b0">Icons</span><span style="color:#d4d4d4">.</span><span style="color:#9cdcfe">favorite</span><span style="color:#179fff">)</span><span style="color:#d4d4d4">,</span></div>
<div class="t ln" style="left:240px;width:34.6px;top:238.90px;color:#c6c6c6">192</div>
<div class="t cd" style="left:304.2px;top:238.90px"><span style="color:#d4d4d4">          </span><span style="color:#9cdcfe">title</span><span style="color:#d4d4d4">: </span><span style="color:#4ec9b0">Text</span><span style="color:#179fff">(</span><span style="color:#9cdcfe">pair</span><span style="color:#d4d4d4">.</span><span style="color:#9cdcfe">asLowerCase</span><span style="color:#179fff">)</span><span style="color:#d4d4d4">,</span></div>
<div class="t ln" style="left:240px;width:34.6px;top:256.90px;color:#858585">193</div>
<div class="t cd" style="left:304.2px;top:256.90px"><span style="color:#d4d4d4">        </span><span style="color:#da70d6">)</span><span style="color:#858585"> // ListTile</span></div>
<div class="t ln" style="left:240px;width:34.6px;top:274.90px;color:#858585">194</div>
<div class="t cd" style="left:304.2px;top:274.90px"><span style="color:#d4d4d4">    </span><span style="color:#ffd700">]</span><span style="color:#d4d4d4">,</span></div>
<div class="t ln" style="left:240px;width:34.6px;top:292.90px;color:#858585">195</div>
<div class="t cd" style="left:304.2px;top:292.90px"><span style="color:#d4d4d4">  </span><span style="color:#179fff">)</span><span style="color:#d4d4d4">;</span><span style="color:#858585"> // ListView</span></div>
<div class="t ln" style="left:240px;width:34.6px;top:310.90px;color:#858585">196</div>
<div class="t cd" style="left:304.2px;top:310.90px"><span style="color:#da70d6">}</span></div>
<div class="a" style="left:233.75px;top:66.7px;width:494.6px;height:3.2px;background:linear-gradient(rgba(0,0,0,.5),rgba(0,0,0,0))"></div>
<svg class="a" style="left:236.3px;top:224.2px" width="12.4" height="11" viewBox="0 0 24 21"><path d="M12 20.500C5 15 1 11.500 1 6.800 1 3.500 3.500 1 6.600 1 8.800 1 10.900 2.200 12 4 13.100 2.200 15.200 1 17.400 1 20.500 1 23 3.500 23 6.800c0 4.700-4 8.200-11 13.700z" fill="#8a8a8a"/></svg>
<svg class="a" style="left:290.2px;top:238.6px" width="6.2" height="8.800" viewBox="0 0 12 17"><path d="M6 0.500a5.300 5.300 0 0 0-3.300 9.500c.8.700 1.100 1.300 1.100 2.200h4.400c0-.9.300-1.500 1.100-2.200A5.300 5.300 0 0 0 6 .5z" fill="#ffcc00"/><rect x="3.800" y="13" width="4.400" height="1.300" fill="#ffcc00"/><rect x="4.300" y="15" width="3.400" height="1.300" fill="#ffcc00"/></svg>
</div></div>
<svg class="a" style="left:728.4px;top:66.7px;opacity:.42" width="33" height="222" viewBox="0 0 33 222"><rect x="0.00" y="0.30" width="5.75" height="0.8" fill="#569cd6"/><rect x="6.54" y="0.30" width="3.02" height="0.8" fill="#ce9178"/><rect x="9.81" y="0.30" width="5.75" height="0.8" fill="#ce9178"/><rect x="16.35" y="0.30" width="2.48" height="0.8" fill="#ce9178"/><rect x="19.07" y="0.30" width="5.20" height="0.8" fill="#ce9178"/><rect x="25.07" y="0.30" width="1.93" height="0.8" fill="#ce9178"/><rect x="0.00" y="1.39" width="4.66" height="0.8" fill="#569cd6"/><rect x="5.45" y="1.39" width="2.48" height="0.8" fill="#ce9178"/><rect x="8.72" y="1.39" width="1.39" height="0.8" fill="#ce9178"/><rect x="10.90" y="1.39" width="1.93" height="0.8" fill="#ce9178"/><rect x="13.08" y="1.39" width="1.39" height="0.8" fill="#ce9178"/><rect x="14.71" y="1.39" width="3.02" height="0.8" fill="#ce9178"/><rect x="18.53" y="1.39" width="1.39" height="0.8" fill="#ce9178"/><rect x="20.71" y="1.39" width="4.11" height="0.8" fill="#ce9178"/><rect x="25.61" y="1.39" width="3.02" height="0.8" fill="#ce9178"/><rect x="29.43" y="1.39" width="0.84" height="0.8" fill="#ce9178"/><rect x="0.00" y="2.49" width="1.93" height="0.8" fill="#569cd6"/><rect x="2.73" y="2.49" width="3.57" height="0.8" fill="#ce9178"/><rect x="7.09" y="2.49" width="5.75" height="0.8" fill="#ce9178"/><rect x="13.08" y="2.49" width="3.57" height="0.8" fill="#ce9178"/><rect x="17.44" y="2.49" width="3.02" height="0.8" fill="#ce9178"/><rect x="21.26" y="2.49" width="3.57" height="0.8" fill="#ce9178"/><rect x="25.07" y="2.49" width="1.93" height="0.8" fill="#ce9178"/><rect x="27.80" y="2.49" width="1.93" height="0.8" fill="#ce9178"/><rect x="1.09" y="5.30" width="1.93" height="0.8" fill="#4ec9b0"/><rect x="3.82" y="5.30" width="1.39" height="0.8" fill="#dcdcaa"/><rect x="5.45" y="5.30" width="1.39" height="0.8" fill="#4ec9b0"/><rect x="7.63" y="5.30" width="0.30" height="0.8" fill="#9cdcfe"/><rect x="0.00" y="8.30" width="3.57" height="0.8" fill="#d4d4d4"/><rect x="3.82" y="8.30" width="3.57" height="0.8" fill="#d4d4d4"/><rect x="7.63" y="8.30" width="4.66" height="0.8" fill="#9cdcfe"/><rect x="12.54" y="8.30" width="3.02" height="0.8" fill="#9cdcfe"/><rect x="15.81" y="8.30" width="1.39" height="0.8" fill="#4ec9b0"/><rect x="17.99" y="8.30" width="2.48" height="0.8" fill="#dcdcaa"/><rect x="1.09" y="9.39" width="2.48" height="0.8" fill="#9cdcfe"/><rect x="4.36" y="9.39" width="4.66" height="0.8" fill="#9cdcfe"/><rect x="9.81" y="9.39" width="4.66" height="0.8" fill="#dcdcaa"/><rect x="14.72" y="9.39" width="3.57" height="0.8" fill="#c586c0"/><rect x="18.53" y="9.39" width="3.02" height="0.8" fill="#569cd6"/><rect x="22.35" y="9.39" width="0.30" height="0.8" fill="#4ec9b0"/><rect x="0.54" y="10.49" width="4.11" height="0.8" fill="#c586c0"/><rect x="5.45" y="10.49" width="1.93" height="0.8" fill="#9cdcfe"/><rect x="7.63" y="10.49" width="3.02" height="0.8" fill="#dcdcaa"/><rect x="10.90" y="10.49" width="3.57" height="0.8" fill="#d4d4d4"/><rect x="1.09" y="13.30" width="2.48" height="0.8" fill="#9cdcfe"/><rect x="3.82" y="13.30" width="2.48" height="0.8" fill="#c586c0"/><rect x="6.54" y="13.30" width="3.02" height="0.8" fill="#dcdcaa"/><rect x="9.81" y="13.30" width="4.66" height="0.8" fill="#dcdcaa"/><rect x="0.54" y="14.39" width="4.66" height="0.8" fill="#4ec9b0"/><rect x="5.45" y="14.39" width="1.39" height="0.8" fill="#4ec9b0"/><rect x="6.54" y="16.39" width="4.66" height="0.8" fill="#4ec9b0"/><rect x="11.99" y="16.39" width="4.66" height="0.8" fill="#569cd6"/><rect x="10.90" y="18.58" width="1.93" height="0.8" fill="#c586c0"/><rect x="13.08" y="18.58" width="3.02" height="0.8" fill="#4ec9b0"/><rect x="16.35" y="18.58" width="3.57" height="0.8" fill="#9cdcfe"/><rect x="20.71" y="18.58" width="3.02" height="0.8" fill="#4ec9b0"/><rect x="23.98" y="18.58" width="1.93" height="0.8" fill="#c586c0"/><rect x="13.08" y="19.67" width="4.11" height="0.8" fill="#569cd6"/><rect x="17.99" y="19.67" width="1.93" height="0.8" fill="#569cd6"/><rect x="10.90" y="20.77" width="4.11" height="0.8" fill="#c586c0"/><rect x="15.26" y="20.77" width="1.39" height="0.8" fill="#9cdcfe"/><rect x="17.44" y="20.77" width="1.93" height="0.8" fill="#c586c0"/><rect x="20.16" y="20.77" width="2.48" height="0.8" fill="#9cdcfe"/><rect x="22.89" y="20.77" width="2.48" height="0.8" fill="#d4d4d4"/><rect x="9.26" y="21.86" width="4.11" height="0.8" fill="#9cdcfe"/><rect x="14.17" y="21.86" width="5.20" height="0.8" fill="#9cdcfe"/><rect x="20.16" y="21.86" width="0.84" height="0.8" fill="#4ec9b0"/><rect x="6.54" y="22.95" width="1.39" height="0.8" fill="#9cdcfe"/><rect x="8.17" y="22.95" width="1.93" height="0.8" fill="#9cdcfe"/><rect x="10.90" y="22.95" width="4.66" height="0.8" fill="#d4d4d4"/><rect x="16.35" y="22.95" width="3.02" height="0.8" fill="#4ec9b0"/><rect x="3.27" y="24.04" width="5.75" height="0.8" fill="#4ec9b0"/><rect x="9.81" y="24.04" width="1.93" height="0.8" fill="#4ec9b0"/><rect x="11.99" y="24.04" width="3.02" height="0.8" fill="#9cdcfe"/><rect x="15.80" y="24.04" width="2.48" height="0.8" fill="#c586c0"/><rect x="4.36" y="25.80" width="3.02" height="0.8" fill="#569cd6"/><rect x="8.18" y="25.80" width="1.93" height="0.8" fill="#4ec9b0"/><rect x="1.09" y="30.30" width="3.02" height="0.8" fill="#9cdcfe"/><rect x="4.36" y="30.30" width="3.02" height="0.8" fill="#9cdcfe"/><rect x="7.63" y="30.30" width="4.11" height="0.8" fill="#dcdcaa"/><rect x="11.99" y="30.30" width="2.48" height="0.8" fill="#4ec9b0"/><rect x="15.26" y="30.30" width="1.39" height="0.8" fill="#9cdcfe"/><rect x="17.44" y="30.30" width="2.48" height="0.8" fill="#9cdcfe"/><rect x="20.71" y="30.30" width="2.48" height="0.8" fill="#c586c0"/><rect x="0.54" y="31.39" width="5.20" height="0.8" fill="#d4d4d4"/><rect x="6.54" y="31.39" width="5.20" height="0.8" fill="#d4d4d4"/><rect x="11.99" y="31.39" width="1.39" height="0.8" fill="#c586c0"/><rect x="14.17" y="31.39" width="1.39" height="0.8" fill="#c586c0"/><rect x="16.35" y="31.39" width="4.11" height="0.8" fill="#c586c0"/><rect x="21.25" y="31.39" width="1.39" height="0.8" fill="#569cd6"/><rect x="23.43" y="31.39" width="4.66" height="0.8" fill="#dcdcaa"/><rect x="1.63" y="33.80" width="2.48" height="0.8" fill="#4ec9b0"/><rect x="4.90" y="33.80" width="1.93" height="0.8" fill="#4ec9b0"/><rect x="7.08" y="33.80" width="4.11" height="0.8" fill="#d4d4d4"/><rect x="1.09" y="34.89" width="3.57" height="0.8" fill="#569cd6"/><rect x="5.45" y="34.89" width="1.39" height="0.8" fill="#4ec9b0"/><rect x="7.63" y="34.89" width="1.39" height="0.8" fill="#569cd6"/><rect x="9.26" y="34.89" width="3.57" height="0.8" fill="#d4d4d4"/><rect x="13.62" y="34.89" width="0.30" height="0.8" fill="#569cd6"/><rect x="1.63" y="37.80" width="4.66" height="0.8" fill="#9cdcfe"/><rect x="6.54" y="37.80" width="1.93" height="0.8" fill="#4ec9b0"/><rect x="1.09" y="38.89" width="5.75" height="0.8" fill="#d4d4d4"/><rect x="7.63" y="38.89" width="3.57" height="0.8" fill="#dcdcaa"/><rect x="1.09" y="39.99" width="3.02" height="0.8" fill="#9cdcfe"/><rect x="4.36" y="39.99" width="3.57" height="0.8" fill="#d4d4d4"/><rect x="8.72" y="39.99" width="0.84" height="0.8" fill="#d4d4d4"/><rect x="1.09" y="43.30" width="5.75" height="0.8" fill="#9cdcfe"/><rect x="7.63" y="43.30" width="5.20" height="0.8" fill="#4ec9b0"/><rect x="13.08" y="43.30" width="1.39" height="0.8" fill="#9cdcfe"/><rect x="2.73" y="44.39" width="5.20" height="0.8" fill="#569cd6"/><rect x="8.72" y="44.39" width="4.11" height="0.8" fill="#4ec9b0"/><rect x="4.36" y="45.49" width="3.02" height="0.8" fill="#4ec9b0"/><rect x="8.18" y="45.49" width="5.20" height="0.8" fill="#c586c0"/><rect x="2.73" y="46.58" width="5.75" height="0.8" fill="#c586c0"/><rect x="9.26" y="46.58" width="4.66" height="0.8" fill="#dcdcaa"/><rect x="14.72" y="46.58" width="2.48" height="0.8" fill="#c586c0"/><rect x="17.99" y="46.58" width="2.48" height="0.8" fill="#dcdcaa"/><rect x="1.09" y="47.67" width="4.66" height="0.8" fill="#4ec9b0"/><rect x="6.54" y="47.67" width="1.39" height="0.8" fill="#9cdcfe"/><rect x="8.72" y="47.67" width="0.84" height="0.8" fill="#4ec9b0"/><rect x="1.09" y="50.30" width="5.20" height="0.8" fill="#9cdcfe"/><rect x="7.09" y="50.30" width="3.02" height="0.8" fill="#dcdcaa"/><rect x="2.18" y="51.39" width="5.20" height="0.8" fill="#d4d4d4"/><rect x="7.63" y="51.39" width="1.93" height="0.8" fill="#9cdcfe"/><rect x="2.18" y="52.49" width="1.39" height="0.8" fill="#4ec9b0"/><rect x="3.81" y="52.49" width="2.48" height="0.8" fill="#dcdcaa"/><rect x="6.54" y="52.49" width="0.84" height="0.8" fill="#d4d4d4"/><rect x="2.18" y="54.80" width="1.93" height="0.8" fill="#4ec9b0"/><rect x="4.90" y="54.80" width="1.93" height="0.8" fill="#c586c0"/><rect x="7.63" y="54.80" width="3.02" height="0.8" fill="#9cdcfe"/><rect x="10.90" y="54.80" width="4.66" height="0.8" fill="#9cdcfe"/><rect x="16.35" y="54.80" width="1.93" height="0.8" fill="#dcdcaa"/><rect x="0.54" y="55.89" width="3.02" height="0.8" fill="#569cd6"/><rect x="3.81" y="55.89" width="4.11" height="0.8" fill="#569cd6"/><rect x="8.72" y="55.89" width="4.11" height="0.8" fill="#dcdcaa"/><rect x="13.08" y="55.89" width="3.02" height="0.8" fill="#9cdcfe"/><rect x="0.00" y="58.80" width="3.57" height="0.8" fill="#9cdcfe"/><rect x="3.82" y="58.80" width="4.66" height="0.8" fill="#9cdcfe"/><rect x="9.27" y="58.80" width="2.48" height="0.8" fill="#dcdcaa"/><rect x="12.54" y="58.80" width="1.39" height="0.8" fill="#9cdcfe"/><rect x="14.17" y="58.80" width="4.11" height="0.8" fill="#d4d4d4"/><rect x="18.53" y="58.80" width="3.02" height="0.8" fill="#d4d4d4"/><rect x="0.00" y="59.89" width="5.20" height="0.8" fill="#9cdcfe"/><rect x="5.45" y="59.89" width="1.39" height="0.8" fill="#4ec9b0"/><rect x="7.09" y="59.89" width="3.02" height="0.8" fill="#569cd6"/><rect x="10.36" y="59.89" width="3.02" height="0.8" fill="#569cd6"/><rect x="13.62" y="59.89" width="3.57" height="0.8" fill="#9cdcfe"/><rect x="17.99" y="59.89" width="1.39" height="0.8" fill="#569cd6"/><rect x="20.16" y="59.89" width="1.39" height="0.8" fill="#9cdcfe"/><rect x="0.00" y="62.30" width="5.75" height="0.8" fill="#d4d4d4"/><rect x="6.54" y="62.30" width="3.02" height="0.8" fill="#d4d4d4"/><rect x="9.81" y="62.30" width="1.39" height="0.8" fill="#dcdcaa"/><rect x="11.44" y="62.30" width="4.66" height="0.8" fill="#4ec9b0"/><rect x="16.89" y="62.30" width="4.11" height="0.8" fill="#9cdcfe"/><rect x="21.25" y="62.30" width="2.48" height="0.8" fill="#9cdcfe"/><rect x="24.52" y="62.30" width="0.30" height="0.8" fill="#d4d4d4"/><rect x="1.63" y="63.39" width="3.02" height="0.8" fill="#d4d4d4"/><rect x="5.45" y="63.39" width="3.57" height="0.8" fill="#9cdcfe"/><rect x="9.81" y="63.39" width="2.48" height="0.8" fill="#9cdcfe"/><rect x="12.54" y="63.39" width="4.11" height="0.8" fill="#d4d4d4"/><rect x="17.44" y="63.39" width="2.48" height="0.8" fill="#9cdcfe"/><rect x="20.17" y="63.39" width="2.48" height="0.8" fill="#9cdcfe"/><rect x="23.44" y="63.39" width="3.57" height="0.8" fill="#4ec9b0"/><rect x="27.25" y="63.39" width="1.39" height="0.8" fill="#d4d4d4"/><rect x="29.43" y="63.39" width="0.84" height="0.8" fill="#dcdcaa"/><rect x="0.00" y="65.58" width="4.66" height="0.8" fill="#569cd6"/><rect x="5.45" y="65.58" width="1.93" height="0.8" fill="#9cdcfe"/><rect x="8.18" y="65.58" width="5.20" height="0.8" fill="#dcdcaa"/><rect x="14.17" y="65.58" width="1.93" height="0.8" fill="#9cdcfe"/><rect x="16.90" y="65.58" width="1.39" height="0.8" fill="#9cdcfe"/><rect x="19.08" y="65.58" width="1.93" height="0.8" fill="#dcdcaa"/><rect x="21.80" y="65.58" width="0.84" height="0.8" fill="#9cdcfe"/><rect x="2.18" y="67.30" width="1.39" height="0.8" fill="#9cdcfe"/><rect x="4.36" y="67.30" width="3.57" height="0.8" fill="#c586c0"/><rect x="8.72" y="67.30" width="5.75" height="0.8" fill="#9cdcfe"/><rect x="15.26" y="67.30" width="1.93" height="0.8" fill="#4ec9b0"/><rect x="17.98" y="67.30" width="0.30" height="0.8" fill="#4ec9b0"/><rect x="7.63" y="69.49" width="5.20" height="0.8" fill="#4ec9b0"/><rect x="13.62" y="69.49" width="4.66" height="0.8" fill="#9cdcfe"/><rect x="5.45" y="70.58" width="4.11" height="0.8" fill="#c586c0"/><rect x="10.36" y="70.58" width="3.57" height="0.8" fill="#c586c0"/><rect x="14.72" y="70.58" width="3.57" height="0.8" fill="#4ec9b0"/><rect x="18.53" y="70.58" width="0.30" height="0.8" fill="#4ec9b0"/><rect x="2.18" y="71.67" width="1.39" height="0.8" fill="#d4d4d4"/><rect x="4.36" y="71.67" width="4.66" height="0.8" fill="#4ec9b0"/><rect x="9.81" y="71.67" width="4.11" height="0.8" fill="#9cdcfe"/><rect x="14.17" y="71.67" width="3.02" height="0.8" fill="#4ec9b0"/><rect x="9.81" y="74.39" width="3.57" height="0.8" fill="#569cd6"/><rect x="10.36" y="75.49" width="3.02" height="0.8" fill="#4ec9b0"/><rect x="10.90" y="76.58" width="5.75" height="0.8" fill="#569cd6"/><rect x="11.99" y="77.67" width="4.66" height="0.8" fill="#4ec9b0"/><rect x="17.44" y="77.67" width="3.57" height="0.8" fill="#9cdcfe"/><rect x="10.90" y="78.77" width="3.57" height="0.8" fill="#569cd6"/><rect x="14.72" y="78.77" width="0.30" height="0.8" fill="#9cdcfe"/><rect x="9.81" y="80.95" width="3.57" height="0.8" fill="#c586c0"/><rect x="14.17" y="80.95" width="1.93" height="0.8" fill="#c586c0"/><rect x="8.72" y="82.04" width="3.02" height="0.8" fill="#4ec9b0"/><rect x="12.54" y="82.04" width="1.39" height="0.8" fill="#4ec9b0"/><rect x="14.72" y="82.04" width="2.48" height="0.8" fill="#9cdcfe"/><rect x="3.27" y="83.80" width="5.75" height="0.8" fill="#c586c0"/><rect x="9.26" y="83.80" width="1.93" height="0.8" fill="#569cd6"/><rect x="11.99" y="83.80" width="3.02" height="0.8" fill="#d4d4d4"/><rect x="15.81" y="83.80" width="5.20" height="0.8" fill="#d4d4d4"/><rect x="21.26" y="83.80" width="4.11" height="0.8" fill="#d4d4d4"/><rect x="8.72" y="86.30" width="1.93" height="0.8" fill="#4ec9b0"/><rect x="11.45" y="86.30" width="3.02" height="0.8" fill="#4ec9b0"/><rect x="15.26" y="86.30" width="3.57" height="0.8" fill="#9cdcfe"/><rect x="19.08" y="86.30" width="1.39" height="0.8" fill="#569cd6"/><rect x="9.81" y="87.39" width="3.57" height="0.8" fill="#569cd6"/><rect x="14.17" y="87.39" width="3.02" height="0.8" fill="#9cdcfe"/><rect x="10.36" y="88.49" width="1.93" height="0.8" fill="#9cdcfe"/><rect x="13.08" y="88.49" width="5.20" height="0.8" fill="#4ec9b0"/><rect x="19.08" y="88.49" width="0.84" height="0.8" fill="#9cdcfe"/><rect x="11.45" y="89.58" width="1.93" height="0.8" fill="#c586c0"/><rect x="14.17" y="89.58" width="4.11" height="0.8" fill="#c586c0"/><rect x="18.53" y="89.58" width="2.48" height="0.8" fill="#d4d4d4"/><rect x="11.99" y="90.67" width="1.93" height="0.8" fill="#d4d4d4"/><rect x="14.72" y="90.67" width="5.20" height="0.8" fill="#c586c0"/><rect x="20.71" y="90.67" width="4.11" height="0.8" fill="#c586c0"/><rect x="12.53" y="91.77" width="5.75" height="0.8" fill="#dcdcaa"/><rect x="18.53" y="91.77" width="4.11" height="0.8" fill="#d4d4d4"/><rect x="22.89" y="91.77" width="1.39" height="0.8" fill="#9cdcfe"/><rect x="13.08" y="92.86" width="4.11" height="0.8" fill="#9cdcfe"/><rect x="17.99" y="92.86" width="2.48" height="0.8" fill="#569cd6"/><rect x="20.71" y="92.86" width="1.93" height="0.8" fill="#4ec9b0"/><rect x="23.44" y="92.86" width="0.84" height="0.8" fill="#dcdcaa"/><rect x="13.62" y="93.95" width="3.57" height="0.8" fill="#4ec9b0"/><rect x="17.99" y="93.95" width="4.66" height="0.8" fill="#9cdcfe"/><rect x="23.44" y="93.95" width="0.30" height="0.8" fill="#c586c0"/><rect x="13.62" y="95.04" width="1.93" height="0.8" fill="#d4d4d4"/><rect x="15.80" y="95.04" width="1.39" height="0.8" fill="#569cd6"/><rect x="17.44" y="95.04" width="2.48" height="0.8" fill="#dcdcaa"/><rect x="13.08" y="96.14" width="5.20" height="0.8" fill="#9cdcfe"/><rect x="19.08" y="96.14" width="1.39" height="0.8" fill="#d4d4d4"/><rect x="12.53" y="97.23" width="1.93" height="0.8" fill="#4ec9b0"/><rect x="15.26" y="97.23" width="4.11" height="0.8" fill="#4ec9b0"/><rect x="20.16" y="97.23" width="1.93" height="0.8" fill="#4ec9b0"/><rect x="11.99" y="98.32" width="1.39" height="0.8" fill="#9cdcfe"/><rect x="14.17" y="98.32" width="4.66" height="0.8" fill="#569cd6"/><rect x="19.07" y="98.32" width="0.30" height="0.8" fill="#9cdcfe"/><rect x="11.45" y="99.42" width="4.66" height="0.8" fill="#c586c0"/><rect x="16.90" y="99.42" width="1.39" height="0.8" fill="#4ec9b0"/><rect x="19.08" y="99.42" width="0.84" height="0.8" fill="#c586c0"/><rect x="10.36" y="100.51" width="1.39" height="0.8" fill="#4ec9b0"/><rect x="11.99" y="100.51" width="5.20" height="0.8" fill="#4ec9b0"/><rect x="17.99" y="100.51" width="1.93" height="0.8" fill="#dcdcaa"/><rect x="20.16" y="100.51" width="2.48" height="0.8" fill="#dcdcaa"/><rect x="9.81" y="101.60" width="5.75" height="0.8" fill="#dcdcaa"/><rect x="16.35" y="101.60" width="2.48" height="0.8" fill="#c586c0"/><rect x="19.62" y="101.60" width="0.30" height="0.8" fill="#c586c0"/><rect x="8.72" y="102.70" width="3.57" height="0.8" fill="#4ec9b0"/><rect x="13.08" y="102.70" width="4.11" height="0.8" fill="#9cdcfe"/><rect x="6.54" y="103.30" width="3.02" height="0.8" fill="#569cd6"/><rect x="10.36" y="103.30" width="4.66" height="0.8" fill="#c586c0"/><rect x="8.72" y="104.39" width="5.20" height="0.8" fill="#d4d4d4"/><rect x="14.72" y="104.39" width="1.93" height="0.8" fill="#9cdcfe"/><rect x="10.90" y="105.49" width="4.11" height="0.8" fill="#569cd6"/><rect x="15.80" y="105.49" width="5.75" height="0.8" fill="#569cd6"/><rect x="8.72" y="106.58" width="5.75" height="0.8" fill="#4ec9b0"/><rect x="14.72" y="106.58" width="2.48" height="0.8" fill="#4ec9b0"/><rect x="17.44" y="106.58" width="2.48" height="0.8" fill="#569cd6"/><rect x="20.17" y="106.58" width="4.11" height="0.8" fill="#c586c0"/><rect x="25.07" y="106.58" width="0.30" height="0.8" fill="#9cdcfe"/><rect x="6.54" y="107.67" width="5.75" height="0.8" fill="#c586c0"/><rect x="12.53" y="107.67" width="3.02" height="0.8" fill="#9cdcfe"/><rect x="15.80" y="107.67" width="1.93" height="0.8" fill="#4ec9b0"/><rect x="17.98" y="107.67" width="1.39" height="0.8" fill="#9cdcfe"/><rect x="20.16" y="107.67" width="5.20" height="0.8" fill="#569cd6"/><rect x="26.16" y="107.67" width="1.39" height="0.8" fill="#c586c0"/><rect x="6.54" y="110.30" width="1.93" height="0.8" fill="#d4d4d4"/><rect x="8.72" y="110.30" width="2.48" height="0.8" fill="#9cdcfe"/><rect x="7.09" y="111.39" width="1.93" height="0.8" fill="#4ec9b0"/><rect x="9.26" y="111.39" width="3.57" height="0.8" fill="#4ec9b0"/><rect x="5.45" y="112.49" width="1.39" height="0.8" fill="#dcdcaa"/><rect x="7.63" y="112.49" width="2.48" height="0.8" fill="#c586c0"/><rect x="10.90" y="112.49" width="0.30" height="0.8" fill="#c586c0"/><rect x="1.09" y="115.39" width="3.02" height="0.8" fill="#dcdcaa"/><rect x="0.54" y="119.80" width="3.57" height="0.8" fill="#4ec9b0"/><rect x="4.90" y="119.80" width="4.11" height="0.8" fill="#4ec9b0"/><rect x="9.81" y="119.80" width="1.93" height="0.8" fill="#9cdcfe"/><rect x="11.99" y="119.80" width="1.93" height="0.8" fill="#569cd6"/><rect x="14.71" y="119.80" width="2.48" height="0.8" fill="#569cd6"/><rect x="17.44" y="119.80" width="4.66" height="0.8" fill="#4ec9b0"/><rect x="0.00" y="120.89" width="3.02" height="0.8" fill="#4ec9b0"/><rect x="3.27" y="120.89" width="1.93" height="0.8" fill="#9cdcfe"/><rect x="6.00" y="120.89" width="1.93" height="0.8" fill="#d4d4d4"/><rect x="8.72" y="120.89" width="5.75" height="0.8" fill="#569cd6"/><rect x="15.26" y="120.89" width="3.02" height="0.8" fill="#569cd6"/><rect x="0.54" y="121.99" width="1.39" height="0.8" fill="#9cdcfe"/><rect x="2.72" y="121.99" width="4.11" height="0.8" fill="#dcdcaa"/><rect x="7.63" y="121.99" width="5.75" height="0.8" fill="#4ec9b0"/><rect x="14.17" y="121.99" width="4.11" height="0.8" fill="#dcdcaa"/><rect x="19.07" y="121.99" width="3.57" height="0.8" fill="#4ec9b0"/><rect x="22.89" y="121.99" width="1.93" height="0.8" fill="#9cdcfe"/><rect x="2.18" y="124.30" width="2.48" height="0.8" fill="#c586c0"/><rect x="5.45" y="124.30" width="3.57" height="0.8" fill="#dcdcaa"/><rect x="9.81" y="124.30" width="5.75" height="0.8" fill="#569cd6"/><rect x="4.36" y="125.39" width="1.39" height="0.8" fill="#dcdcaa"/><rect x="6.00" y="125.39" width="2.48" height="0.8" fill="#dcdcaa"/><rect x="9.26" y="125.39" width="4.66" height="0.8" fill="#d4d4d4"/><rect x="14.72" y="125.39" width="1.93" height="0.8" fill="#d4d4d4"/><rect x="17.44" y="125.39" width="2.48" height="0.8" fill="#9cdcfe"/><rect x="4.36" y="127.58" width="5.75" height="0.8" fill="#9cdcfe"/><rect x="10.90" y="127.58" width="3.57" height="0.8" fill="#569cd6"/><rect x="15.26" y="127.58" width="4.11" height="0.8" fill="#569cd6"/><rect x="19.62" y="127.58" width="1.39" height="0.8" fill="#c586c0"/><rect x="21.80" y="127.58" width="4.11" height="0.8" fill="#dcdcaa"/><rect x="2.18" y="128.67" width="5.75" height="0.8" fill="#9cdcfe"/><rect x="8.72" y="128.67" width="1.39" height="0.8" fill="#9cdcfe"/><rect x="10.35" y="128.67" width="2.48" height="0.8" fill="#c586c0"/><rect x="13.62" y="128.67" width="3.02" height="0.8" fill="#4ec9b0"/><rect x="7.63" y="129.30" width="2.48" height="0.8" fill="#9cdcfe"/><rect x="10.36" y="129.30" width="1.93" height="0.8" fill="#569cd6"/><rect x="8.72" y="130.39" width="4.11" height="0.8" fill="#4ec9b0"/><rect x="13.62" y="130.39" width="1.39" height="0.8" fill="#569cd6"/><rect x="15.80" y="130.39" width="1.93" height="0.8" fill="#9cdcfe"/><rect x="9.26" y="131.49" width="4.66" height="0.8" fill="#c586c0"/><rect x="14.72" y="131.49" width="5.20" height="0.8" fill="#9cdcfe"/><rect x="20.71" y="131.49" width="1.93" height="0.8" fill="#9cdcfe"/><rect x="23.44" y="131.49" width="3.57" height="0.8" fill="#9cdcfe"/><rect x="10.90" y="133.67" width="4.66" height="0.8" fill="#9cdcfe"/><rect x="16.35" y="133.67" width="4.11" height="0.8" fill="#c586c0"/><rect x="11.45" y="134.76" width="5.20" height="0.8" fill="#dcdcaa"/><rect x="17.44" y="134.76" width="0.30" height="0.8" fill="#4ec9b0"/><rect x="11.99" y="135.86" width="5.75" height="0.8" fill="#c586c0"/><rect x="18.53" y="135.86" width="1.93" height="0.8" fill="#dcdcaa"/><rect x="12.53" y="138.04" width="5.75" height="0.8" fill="#9cdcfe"/><rect x="19.07" y="138.04" width="2.48" height="0.8" fill="#dcdcaa"/><rect x="22.34" y="138.04" width="1.39" height="0.8" fill="#9cdcfe"/><rect x="11.99" y="139.14" width="5.75" height="0.8" fill="#4ec9b0"/><rect x="11.45" y="140.23" width="4.11" height="0.8" fill="#569cd6"/><rect x="10.90" y="141.32" width="4.66" height="0.8" fill="#569cd6"/><rect x="16.35" y="141.32" width="3.02" height="0.8" fill="#4ec9b0"/><rect x="20.17" y="141.32" width="1.39" height="0.8" fill="#4ec9b0"/><rect x="22.35" y="141.32" width="3.02" height="0.8" fill="#d4d4d4"/><rect x="10.36" y="142.42" width="3.02" height="0.8" fill="#c586c0"/><rect x="14.17" y="142.42" width="1.39" height="0.8" fill="#dcdcaa"/><rect x="16.35" y="142.42" width="2.48" height="0.8" fill="#4ec9b0"/><rect x="9.26" y="143.51" width="5.75" height="0.8" fill="#dcdcaa"/><rect x="15.26" y="143.51" width="1.39" height="0.8" fill="#9cdcfe"/><rect x="8.72" y="144.60" width="4.66" height="0.8" fill="#569cd6"/><rect x="14.17" y="144.60" width="3.57" height="0.8" fill="#9cdcfe"/><rect x="7.63" y="145.69" width="3.02" height="0.8" fill="#c586c0"/><rect x="10.90" y="145.69" width="2.48" height="0.8" fill="#c586c0"/><rect x="8.17" y="147.30" width="1.93" height="0.8" fill="#dcdcaa"/><rect x="10.90" y="147.30" width="2.48" height="0.8" fill="#dcdcaa"/><rect x="14.17" y="147.30" width="0.30" height="0.8" fill="#9cdcfe"/><rect x="1.09" y="156.80" width="5.75" height="0.8" fill="#4ec9b0"/><rect x="7.09" y="156.80" width="3.57" height="0.8" fill="#c586c0"/><rect x="11.45" y="156.80" width="1.93" height="0.8" fill="#569cd6"/><rect x="14.17" y="156.80" width="1.93" height="0.8" fill="#dcdcaa"/><rect x="1.09" y="157.89" width="2.48" height="0.8" fill="#569cd6"/><rect x="3.82" y="157.89" width="5.20" height="0.8" fill="#9cdcfe"/><rect x="9.27" y="157.89" width="4.66" height="0.8" fill="#4ec9b0"/><rect x="1.09" y="160.30" width="5.20" height="0.8" fill="#4ec9b0"/><rect x="7.09" y="160.30" width="2.48" height="0.8" fill="#569cd6"/><rect x="2.18" y="161.39" width="4.66" height="0.8" fill="#dcdcaa"/><rect x="7.63" y="161.39" width="0.84" height="0.8" fill="#c586c0"/><rect x="3.27" y="162.49" width="5.20" height="0.8" fill="#dcdcaa"/><rect x="9.26" y="162.49" width="1.93" height="0.8" fill="#c586c0"/><rect x="2.18" y="163.58" width="5.20" height="0.8" fill="#569cd6"/><rect x="8.17" y="163.58" width="2.48" height="0.8" fill="#4ec9b0"/><rect x="11.44" y="163.58" width="1.93" height="0.8" fill="#9cdcfe"/><rect x="1.09" y="164.67" width="1.39" height="0.8" fill="#9cdcfe"/><rect x="2.73" y="164.67" width="2.48" height="0.8" fill="#dcdcaa"/><rect x="6.00" y="164.67" width="2.48" height="0.8" fill="#4ec9b0"/><rect x="9.26" y="164.67" width="4.66" height="0.8" fill="#4ec9b0"/><rect x="3.27" y="166.80" width="3.57" height="0.8" fill="#4ec9b0"/><rect x="7.09" y="166.80" width="5.75" height="0.8" fill="#569cd6"/><rect x="13.62" y="166.80" width="3.57" height="0.8" fill="#dcdcaa"/><rect x="17.44" y="166.80" width="5.20" height="0.8" fill="#4ec9b0"/><rect x="22.89" y="166.80" width="0.30" height="0.8" fill="#9cdcfe"/><rect x="1.63" y="167.89" width="2.48" height="0.8" fill="#4ec9b0"/><rect x="4.90" y="167.89" width="2.48" height="0.8" fill="#569cd6"/><rect x="8.17" y="167.89" width="5.20" height="0.8" fill="#4ec9b0"/><rect x="13.62" y="167.89" width="0.30" height="0.8" fill="#9cdcfe"/><rect x="2.73" y="168.99" width="5.20" height="0.8" fill="#9cdcfe"/><rect x="8.18" y="168.99" width="1.39" height="0.8" fill="#dcdcaa"/><rect x="10.36" y="168.99" width="3.57" height="0.8" fill="#9cdcfe"/><rect x="14.72" y="168.99" width="3.02" height="0.8" fill="#9cdcfe"/><rect x="18.53" y="168.99" width="1.39" height="0.8" fill="#dcdcaa"/><rect x="4.36" y="170.30" width="1.39" height="0.8" fill="#569cd6"/><rect x="6.54" y="170.30" width="1.39" height="0.8" fill="#d4d4d4"/><rect x="8.72" y="170.30" width="2.48" height="0.8" fill="#4ec9b0"/><rect x="11.99" y="170.30" width="3.02" height="0.8" fill="#9cdcfe"/><rect x="15.80" y="170.30" width="0.30" height="0.8" fill="#dcdcaa"/><rect x="6.00" y="171.39" width="5.75" height="0.8" fill="#569cd6"/><rect x="12.53" y="171.39" width="3.02" height="0.8" fill="#9cdcfe"/><rect x="15.80" y="171.39" width="5.20" height="0.8" fill="#c586c0"/><rect x="21.80" y="171.39" width="5.20" height="0.8" fill="#4ec9b0"/><rect x="7.09" y="172.49" width="5.75" height="0.8" fill="#9cdcfe"/><rect x="13.62" y="172.49" width="1.93" height="0.8" fill="#4ec9b0"/><rect x="16.35" y="172.49" width="1.39" height="0.8" fill="#d4d4d4"/><rect x="8.17" y="173.58" width="3.57" height="0.8" fill="#9cdcfe"/><rect x="12.53" y="173.58" width="3.02" height="0.8" fill="#c586c0"/><rect x="15.80" y="173.58" width="1.93" height="0.8" fill="#4ec9b0"/><rect x="9.26" y="174.67" width="2.48" height="0.8" fill="#dcdcaa"/><rect x="12.53" y="174.67" width="1.93" height="0.8" fill="#4ec9b0"/><rect x="15.26" y="174.67" width="4.66" height="0.8" fill="#4ec9b0"/><rect x="20.16" y="174.67" width="2.48" height="0.8" fill="#d4d4d4"/><rect x="10.36" y="175.76" width="1.39" height="0.8" fill="#c586c0"/><rect x="12.53" y="175.76" width="3.02" height="0.8" fill="#4ec9b0"/><rect x="15.80" y="175.76" width="3.02" height="0.8" fill="#569cd6"/><rect x="19.62" y="175.76" width="2.48" height="0.8" fill="#4ec9b0"/><rect x="22.35" y="175.76" width="3.57" height="0.8" fill="#9cdcfe"/><rect x="26.71" y="175.76" width="3.02" height="0.8" fill="#569cd6"/><rect x="10.36" y="176.86" width="5.20" height="0.8" fill="#9cdcfe"/><rect x="15.81" y="176.86" width="3.02" height="0.8" fill="#c586c0"/><rect x="19.62" y="176.86" width="3.02" height="0.8" fill="#9cdcfe"/><rect x="9.26" y="177.95" width="1.93" height="0.8" fill="#c586c0"/><rect x="11.99" y="177.95" width="4.11" height="0.8" fill="#dcdcaa"/><rect x="16.35" y="177.95" width="1.39" height="0.8" fill="#4ec9b0"/><rect x="18.53" y="177.95" width="1.93" height="0.8" fill="#4ec9b0"/><rect x="8.17" y="179.04" width="3.02" height="0.8" fill="#d4d4d4"/><rect x="11.99" y="179.04" width="1.93" height="0.8" fill="#d4d4d4"/><rect x="14.17" y="179.04" width="1.93" height="0.8" fill="#9cdcfe"/><rect x="7.09" y="180.14" width="5.20" height="0.8" fill="#9cdcfe"/><rect x="13.08" y="180.14" width="1.39" height="0.8" fill="#4ec9b0"/><rect x="6.00" y="181.23" width="3.02" height="0.8" fill="#4ec9b0"/><rect x="9.26" y="181.23" width="4.11" height="0.8" fill="#dcdcaa"/><rect x="14.17" y="181.23" width="1.93" height="0.8" fill="#d4d4d4"/><rect x="16.89" y="181.23" width="2.48" height="0.8" fill="#4ec9b0"/><rect x="20.16" y="181.23" width="0.30" height="0.8" fill="#c586c0"/><rect x="9.26" y="184.39" width="3.57" height="0.8" fill="#4ec9b0"/><rect x="13.62" y="184.39" width="5.20" height="0.8" fill="#c586c0"/><rect x="19.62" y="184.39" width="1.39" height="0.8" fill="#c586c0"/><rect x="10.36" y="185.49" width="4.11" height="0.8" fill="#c586c0"/><rect x="15.26" y="185.49" width="2.48" height="0.8" fill="#4ec9b0"/><rect x="18.53" y="185.49" width="2.48" height="0.8" fill="#d4d4d4"/><rect x="11.45" y="186.58" width="1.39" height="0.8" fill="#9cdcfe"/><rect x="13.62" y="186.58" width="3.57" height="0.8" fill="#9cdcfe"/><rect x="12.53" y="187.67" width="4.66" height="0.8" fill="#9cdcfe"/><rect x="17.44" y="187.67" width="2.48" height="0.8" fill="#c586c0"/><rect x="20.71" y="187.67" width="4.11" height="0.8" fill="#d4d4d4"/><rect x="11.45" y="189.86" width="3.02" height="0.8" fill="#c586c0"/><rect x="15.26" y="189.86" width="3.02" height="0.8" fill="#dcdcaa"/><rect x="19.08" y="189.86" width="1.39" height="0.8" fill="#9cdcfe"/><rect x="20.71" y="189.86" width="0.30" height="0.8" fill="#4ec9b0"/><rect x="10.36" y="190.95" width="5.75" height="0.8" fill="#d4d4d4"/><rect x="16.89" y="190.95" width="4.11" height="0.8" fill="#9cdcfe"/><rect x="21.25" y="190.95" width="4.11" height="0.8" fill="#dcdcaa"/><rect x="9.26" y="192.04" width="2.48" height="0.8" fill="#569cd6"/><rect x="12.53" y="192.04" width="4.66" height="0.8" fill="#c586c0"/><rect x="7.63" y="193.14" width="5.20" height="0.8" fill="#dcdcaa"/><rect x="13.62" y="193.14" width="3.02" height="0.8" fill="#d4d4d4"/><rect x="17.44" y="193.14" width="2.48" height="0.8" fill="#569cd6"/><rect x="20.17" y="193.14" width="1.93" height="0.8" fill="#9cdcfe"/><rect x="6.00" y="194.30" width="4.11" height="0.8" fill="#4ec9b0"/><rect x="0.54" y="200.30" width="1.39" height="0.8" fill="#d4d4d4"/><rect x="2.72" y="200.30" width="4.66" height="0.8" fill="#9cdcfe"/><rect x="8.17" y="200.30" width="3.57" height="0.8" fill="#d4d4d4"/><rect x="12.53" y="200.30" width="4.11" height="0.8" fill="#569cd6"/><rect x="17.44" y="200.30" width="3.02" height="0.8" fill="#569cd6"/><rect x="21.25" y="200.30" width="4.11" height="0.8" fill="#569cd6"/><rect x="0.54" y="201.39" width="2.48" height="0.8" fill="#dcdcaa"/><rect x="3.81" y="201.39" width="3.57" height="0.8" fill="#dcdcaa"/><rect x="8.17" y="201.39" width="2.48" height="0.8" fill="#4ec9b0"/><rect x="11.44" y="201.39" width="2.48" height="0.8" fill="#c586c0"/><rect x="14.71" y="201.39" width="3.57" height="0.8" fill="#9cdcfe"/><rect x="19.07" y="201.39" width="0.84" height="0.8" fill="#9cdcfe"/><rect x="1.09" y="204.30" width="3.02" height="0.8" fill="#c586c0"/><rect x="4.91" y="204.30" width="5.75" height="0.8" fill="#9cdcfe"/><rect x="2.73" y="205.39" width="5.20" height="0.8" fill="#569cd6"/><rect x="8.72" y="205.39" width="1.93" height="0.8" fill="#c586c0"/><rect x="11.45" y="205.39" width="3.57" height="0.8" fill="#dcdcaa"/><rect x="15.81" y="205.39" width="4.66" height="0.8" fill="#569cd6"/><rect x="21.26" y="205.39" width="1.39" height="0.8" fill="#dcdcaa"/><rect x="2.73" y="206.49" width="2.48" height="0.8" fill="#9cdcfe"/><rect x="6.00" y="206.49" width="3.57" height="0.8" fill="#4ec9b0"/><rect x="10.36" y="206.49" width="1.93" height="0.8" fill="#569cd6"/><rect x="13.08" y="206.49" width="1.39" height="0.8" fill="#c586c0"/><rect x="15.26" y="206.49" width="2.48" height="0.8" fill="#c586c0"/><rect x="18.53" y="206.49" width="3.02" height="0.8" fill="#c586c0"/><rect x="1.09" y="207.58" width="4.11" height="0.8" fill="#c586c0"/><rect x="6.00" y="207.58" width="1.39" height="0.8" fill="#569cd6"/><rect x="7.63" y="207.58" width="1.39" height="0.8" fill="#c586c0"/><rect x="9.81" y="207.58" width="1.93" height="0.8" fill="#4ec9b0"/><rect x="11.99" y="207.58" width="1.93" height="0.8" fill="#4ec9b0"/><rect x="4.90" y="209.39" width="1.39" height="0.8" fill="#9cdcfe"/><rect x="7.08" y="209.39" width="5.75" height="0.8" fill="#9cdcfe"/><rect x="13.62" y="209.39" width="1.39" height="0.8" fill="#dcdcaa"/><rect x="15.80" y="209.39" width="3.57" height="0.8" fill="#c586c0"/><rect x="19.62" y="209.39" width="0.30" height="0.8" fill="#dcdcaa"/><rect x="6.54" y="210.49" width="1.39" height="0.8" fill="#569cd6"/><rect x="8.72" y="210.49" width="1.93" height="0.8" fill="#9cdcfe"/><rect x="11.44" y="210.49" width="4.11" height="0.8" fill="#4ec9b0"/><rect x="7.63" y="211.58" width="1.39" height="0.8" fill="#dcdcaa"/><rect x="9.26" y="211.58" width="4.11" height="0.8" fill="#4ec9b0"/><rect x="14.17" y="211.58" width="3.57" height="0.8" fill="#dcdcaa"/><rect x="18.53" y="211.58" width="3.02" height="0.8" fill="#9cdcfe"/><rect x="8.72" y="212.67" width="1.93" height="0.8" fill="#4ec9b0"/><rect x="11.45" y="212.67" width="4.66" height="0.8" fill="#c586c0"/><rect x="16.90" y="212.67" width="1.39" height="0.8" fill="#4ec9b0"/><rect x="19.08" y="212.67" width="2.48" height="0.8" fill="#dcdcaa"/><rect x="22.35" y="212.67" width="4.66" height="0.8" fill="#d4d4d4"/><rect x="27.80" y="212.67" width="1.93" height="0.8" fill="#d4d4d4"/><rect x="7.63" y="213.76" width="3.57" height="0.8" fill="#9cdcfe"/><rect x="11.99" y="213.76" width="4.11" height="0.8" fill="#9cdcfe"/><rect x="16.89" y="213.76" width="1.93" height="0.8" fill="#dcdcaa"/><rect x="6.54" y="214.86" width="2.48" height="0.8" fill="#c586c0"/><rect x="9.81" y="214.86" width="3.02" height="0.8" fill="#569cd6"/><rect x="13.62" y="214.86" width="1.93" height="0.8" fill="#569cd6"/><rect x="15.80" y="214.86" width="4.11" height="0.8" fill="#d4d4d4"/><rect x="20.16" y="214.86" width="4.66" height="0.8" fill="#4ec9b0"/><rect x="25.07" y="214.86" width="0.30" height="0.8" fill="#4ec9b0"/><rect x="4.90" y="215.95" width="3.02" height="0.8" fill="#4ec9b0"/><rect x="8.17" y="215.95" width="4.11" height="0.8" fill="#9cdcfe"/><rect x="13.08" y="215.95" width="1.93" height="0.8" fill="#d4d4d4"/><rect x="15.80" y="215.95" width="5.20" height="0.8" fill="#dcdcaa"/><rect x="21.80" y="215.95" width="3.02" height="0.8" fill="#569cd6"/><rect x="3.27" y="217.04" width="2.48" height="0.8" fill="#d4d4d4"/><rect x="6.54" y="217.04" width="1.39" height="0.8" fill="#569cd6"/><rect x="8.72" y="217.04" width="4.66" height="0.8" fill="#4ec9b0"/><rect x="13.62" y="217.04" width="1.39" height="0.8" fill="#4ec9b0"/><rect x="3.27" y="218.30" width="1.39" height="0.8" fill="#4ec9b0"/></svg>
<div class="a" style="left:728.4px;top:281px;width:32.8px;height:1.1px;background:#264f78;opacity:.9"></div>
<div class="a" style="left:761.2px;top:66.7px;width:.6px;height:262.7px;background:#303030"></div>
<div class="a" style="left:761.8px;top:293px;width:7.9px;height:17.5px;background:#424242"></div>
<div class="a" style="left:761.8px;top:303.3px;width:7.900px;height:1.3px;background:#8a8a8a"></div>
<div class="t" style="left:244.25px;top:333.50px;line-height:12px;height:12px;font-family:'Liberation Sans',sans-serif;font-size:5.98px;font-weight:normal;font-style:normal;color:#969696;letter-spacing:-0.053px;">PROBLEMS</div>
<div class="a" style="left:282.9px;top:334.80px;width:9.4px;height:9.4px;border-radius:50%;background:#4d4d4d;color:#fff;font-size:6px;line-height:9.6px;text-align:center">3</div>
<div class="t" style="left:304.25px;top:333.50px;line-height:12px;height:12px;font-family:'Liberation Sans',sans-serif;font-size:5.98px;font-weight:normal;font-style:normal;color:#969696;letter-spacing:0.076px;">OUTPUT</div>
<div class="t" style="left:342.50px;top:333.50px;line-height:12px;height:12px;font-family:'Liberation Sans',sans-serif;font-size:5.98px;font-weight:bold;font-style:normal;color:#e7e7e7;letter-spacing:-0.076px;">DEBUG CONSOLE</div>
<div class="a" style="left:342.5px;top:343.2px;width:51.75px;height:.7px;background:#e7e7e7"></div>
<div class="t" style="left:407.50px;top:333.50px;line-height:12px;height:12px;font-family:'Liberation Sans',sans-serif;font-size:5.98px;font-weight:normal;font-style:normal;color:#969696;letter-spacing:-0.023px;">TERMINAL</div>
<div class="a" style="left:506px;top:332.6px;width:218.6px;height:13px;background:#3c3c3c"></div>
<div class="t" style="left:510.50px;top:333.80px;line-height:12px;height:12px;font-family:'Liberation Sans',sans-serif;font-size:7.07px;font-weight:normal;font-style:normal;color:#a6a6a6;letter-spacing:-0.044px;">Filter (e.g. text, !exclude)</div>
<svg class="a" style="left:728.50px;top:334.50px;" width="9" height="9" viewBox="0 0 16 16" fill="none" stroke="#c5c5c5" stroke-width="1.2" stroke-linejoin="round" stroke-linecap="round"><path d="M1.500 3h13v3h-13zM1.500 8h8M1.500 10.500h8M1.500 13h8" /><path d="M11.500 9.500l3 3M14.500 9.500l-3 3"/></svg>
<svg class="a" style="left:742.30px;top:334.70px;" width="9" height="9" viewBox="0 0 16 16" fill="none" stroke="#d0d0d0" stroke-width="1.7" stroke-linejoin="round" stroke-linecap="round"><path d="M3 10.500l5-5 5 5"/></svg>
<svg class="a" style="left:754.70px;top:334.70px;" width="8.6" height="8.6" viewBox="0 0 16 16" fill="none" stroke="#d0d0d0" stroke-width="1.7" stroke-linejoin="round" stroke-linecap="round"><path d="M3.500 3.500l9 9M12.500 3.500l-9 9"/></svg>
<div class="t con" style="left:249.8px;top:349.55px;color:#3794ff">le container rather than a Flex, like a ListView.</div>
<div class="t con" style="left:249.8px;top:367.93px;color:#3794ff">The specific RenderFlex in question is: RenderFlex#04b75 relayoutBoundary=up11 OVERFLOWING</div>
<div class="a" style="left:250px;top:380.22px;width:315.75px;height:2px;background:#e27a62"></div>
<div class="t con" style="left:249.8px;top:386.31px;color:#3794ff">Reloaded 1 of 657 libraries in 580ms (compile: 12 ms, reload: 369 ms, reassemble: 188 ms).</div>
<div class="t con" style="left:249.8px;top:395.50px;color:#3794ff">Reloaded 1 of 657 libraries in 638ms (compile: 15 ms, reload: 372 ms, reassemble: 240 ms).</div>
<div class="t con" style="left:249.8px;top:404.69px;color:#3794ff">Reloaded 1 of 657 libraries in 172ms (compile: 15 ms, reload: 80 ms, reassemble: 66 ms).</div>
<div class="t con" style="left:249.8px;top:413.88px;color:#3794ff">Reloaded 1 of 657 libraries in 155ms (compile: 17 ms, reload: 75 ms, reassemble: 52 ms).</div>
<div class="t con" style="left:249.8px;top:423.07px;color:#3794ff">Reloaded 1 of 657 libraries in 164ms (compile: 18 ms, reload: 79 ms, reassemble: 55 ms).</div>
<div class="t con" style="left:249.8px;top:432.26px;color:#3794ff">Reloaded 1 of 657 libraries in 183ms (compile: 25 ms, reload: 100 ms, reassemble: 40 ms).</div>
<div class="t con" style="left:249.8px;top:441.45px;color:#3794ff">Application finished.</div>
<div class="t con" style="left:249.8px;top:450.64px;color:#cca700">Exited</div>
<div class="a" style="left:233.75px;top:459.3px;width:536px;height:.6px;background:#3a3a3a"></div>
<svg class="a" style="left:238.15px;top:459.85px;" width="8.7" height="8.7" viewBox="0 0 16 16" fill="none" stroke="#c5c5c5" stroke-width="1.5" stroke-linejoin="round" stroke-linecap="round"><path d="M6 3l5 5-5 5"/></svg>
<svg class="a" style="left:36.65px;top:469.95px;" width="8.7" height="8.7" viewBox="0 0 16 16" fill="none" stroke="#fff" stroke-width="1.45" stroke-linejoin="round" stroke-linecap="round"><circle cx="4.500" cy="3.500" r="1.700"/><circle cx="4.500" cy="12.500" r="1.700"/><circle cx="11.500" cy="5.500" r="1.700"/><path d="M4.500 5.200v5.600M11.500 7.200c0 2.800-4 2.300-7 3.600"/></svg>
<div class="t" style="left:48.00px;top:469.00px;line-height:12px;height:12px;font-family:'Liberation Sans',sans-serif;font-size:6.52px;font-weight:normal;font-style:normal;color:#fff;letter-spacing:0.216px;">main*</div>
<svg class="a" style="left:74.40px;top:469.95px;" width="8.7" height="8.7" viewBox="0 0 16 16" fill="none" stroke="#fff" stroke-width="1.45" stroke-linejoin="round" stroke-linecap="round"><path d="M2.800 6.500A5.400 5.400 0 0 1 13 6M13.200 9.500A5.400 5.400 0 0 1 3 10"/><path d="M13.300 3v3.200h-3.200M2.700 13V9.800h3.200"/></svg>
<svg class="a" style="left:90.15px;top:469.95px;" width="8.7" height="8.7" viewBox="0 0 16 16" fill="none" stroke="#fff" stroke-width="1.45" stroke-linejoin="round" stroke-linecap="round"><circle cx="8" cy="8" r="6"/><path d="M5.800 5.800l4.400 4.400M10.200 5.800l-4.400 4.400"/></svg>
<div class="t" style="left:100.60px;top:469.00px;line-height:12px;height:12px;font-family:'Liberation Sans',sans-serif;font-size:6.52px;font-weight:normal;font-style:normal;color:#fff;letter-spacing:0;">2</div>
<svg class="a" style="left:106.15px;top:469.95px;" width="8.7" height="8.7" viewBox="0 0 16 16" fill="none" stroke="#fff" stroke-width="1.45" stroke-linejoin="round" stroke-linecap="round"><path d="M8 2L14.500 13.500h-13z"/><path d="M8 6.500v3.500M8 11.500v.5"/></svg>
<div class="t" style="left:115.70px;top:469.00px;line-height:12px;height:12px;font-family:'Liberation Sans',sans-serif;font-size:6.52px;font-weight:normal;font-style:normal;color:#fff;letter-spacing:0;">0</div>
<svg class="a" style="left:120.90px;top:469.95px;" width="8.7" height="8.7" viewBox="0 0 16 16" fill="none" stroke="#fff" stroke-width="1.45" stroke-linejoin="round" stroke-linecap="round"><circle cx="8" cy="8" r="6"/><path d="M8 7.500v3.500M8 5v.5"/></svg>
<div class="t" style="left:130.80px;top:469.00px;line-height:12px;height:12px;font-family:'Liberation Sans',sans-serif;font-size:6.52px;font-weight:normal;font-style:normal;color:#fff;letter-spacing:0;">1</div>
<svg class="a" style="left:142.15px;top:469.95px;" width="8.7" height="8.7" viewBox="0 0 16 16" fill="none" stroke="#fff" stroke-width="1.45" stroke-linejoin="round" stroke-linecap="round"><path d="M5.500 6V2.500L14 8l-5 3.300"/><rect x="2.500" y="9" width="5" height="4.500" rx="0.500"/><path d="M3.500 9V7.800a1.500 1.500 0 0 1 3 0V9"/></svg>
<div class="t" style="left:510.00px;top:469.00px;line-height:12px;height:12px;font-family:'Liberation Sans',sans-serif;font-size:6.52px;font-weight:normal;font-style:normal;color:#fff;letter-spacing:0.108px;">Ln 192, Col 43</div>
<div class="t" style="left:563.25px;top:469.00px;line-height:12px;height:12px;font-family:'Liberation Sans',sans-serif;font-size:6.52px;font-weight:normal;font-style:normal;color:#fff;letter-spacing:0.113px;">Spaces: 2</div>
<div class="t" style="left:602.25px;top:469.00px;line-height:12px;height:12px;font-family:'Liberation Sans',sans-serif;font-size:6.52px;font-weight:normal;font-style:normal;color:#fff;letter-spacing:0.206px;">UTF-8</div>
<div class="t" style="left:630.75px;top:469.00px;line-height:12px;height:12px;font-family:'Liberation Sans',sans-serif;font-size:6.52px;font-weight:normal;font-style:normal;color:#fff;letter-spacing:-0.230px;">LF</div>
<div class="t" style="left:646.50px;top:469.00px;line-height:12px;height:12px;font-family:'Liberation Sans',sans-serif;font-size:6.52px;font-weight:normal;font-style:normal;color:#fff;letter-spacing:1.070px;">{}</div>
<div class="t" style="left:656.50px;top:469.00px;line-height:12px;height:12px;font-family:'Liberation Sans',sans-serif;font-size:6.52px;font-weight:normal;font-style:normal;color:#fff;letter-spacing:0.297px;">Dart</div>
<div class="t" style="left:678.75px;top:469.00px;line-height:12px;height:12px;font-family:'Liberation Sans',sans-serif;font-size:6.52px;font-weight:normal;font-style:normal;color:#fff;letter-spacing:0.173px;">macOS (darwin)</div>
<svg class="a" style="left:736.65px;top:469.95px;" width="8.7" height="8.7" viewBox="0 0 16 16" fill="none" stroke="#fff" stroke-width="1.3" stroke-linejoin="round" stroke-linecap="round"><path d="M2.500 13.500V3h9.500l-1.500 3.500h-6"/><circle cx="11" cy="9.500" r="1.700"/><path d="M7.800 14c.5-2 1.800-2.500 3.200-2.500s2.700.5 3.200 2.500"/></svg>
<svg class="a" style="left:753.45px;top:469.95px;" width="8.7" height="8.7" viewBox="0 0 16 16" fill="none" stroke="#fff" stroke-width="1.3" stroke-linejoin="round" stroke-linecap="round"><path d="M4 11V7.500a4 4 0 0 1 6.500-3.100M12 8v3l1 1.500H3L4 11M6.800 13.500a1.300 1.300 0 0 0 2.400 0"/><circle cx="12" cy="4.500" r="1.800" fill="#fff" stroke="none"/></svg>

<!--TABS-->
<!--BC-->
<!--CODE-->
<!--PANEL-->
<!--STATUS-->
</div><div class="a" style="left:0;top:0;right:0;bottom:0;border-radius:5.5px;box-shadow:inset 0 0 0 .9px rgba(255,255,255,.26);pointer-events:none"></div></div>
</body></html>
